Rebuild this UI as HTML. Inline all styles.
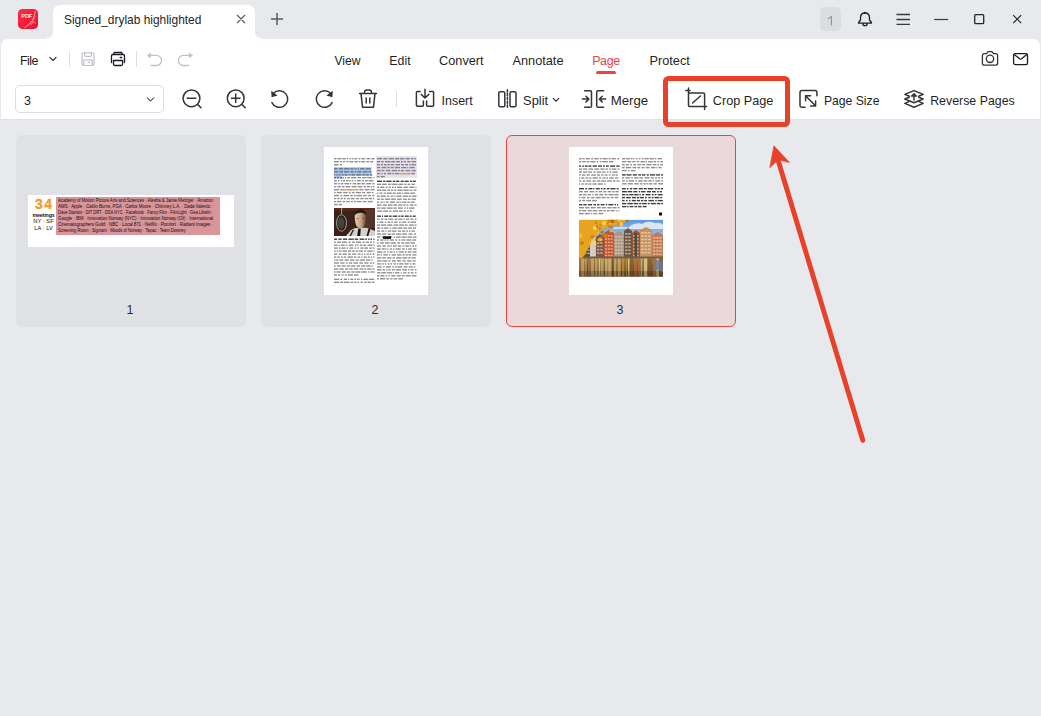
<!DOCTYPE html>
<html><head><meta charset="utf-8">
<style>
*{margin:0;padding:0;box-sizing:border-box}
html,body{width:1041px;height:716px;overflow:hidden}
body{background:#e8e9ec;font-family:"Liberation Sans",sans-serif;color:#1f1f24;position:relative}
.a{position:absolute}
.t{position:absolute;white-space:nowrap;line-height:1;font-size:12.5px}
svg{position:absolute;overflow:visible}
.ic{fill:none;stroke:#34353b;stroke-width:1.5;stroke-linecap:round;stroke-linejoin:round}
</style></head><body>

<!-- title bar -->
<svg style="left:18px;top:9px" width="20" height="20" viewBox="0 0 20 20"><defs><linearGradient id="lg" x1="0" y1="0" x2="1" y2="1"><stop offset="0" stop-color="#ff2a48"/><stop offset="1" stop-color="#f0102e"/></linearGradient></defs><rect x="0" y="0" width="20" height="20" rx="4.5" fill="url(#lg)"/><path d="M17 1.5Q17.5 12 8 18.5Q15 16 17.5 9" fill="#ff6a7c" opacity="0.55"/><path d="M17.2 2Q16.5 13 6.5 18.5" stroke="#ffd0d6" stroke-width="0.8" fill="none" opacity="0.9"/><path d="M13.5 15.5L15.5 12.5L17.5 14.5" stroke="#ffd0d6" stroke-width="0.7" fill="none" opacity="0.8"/><text x="3.3" y="8.9" font-family="Liberation Sans" font-weight="bold" font-size="5.6" fill="#ffe8ea" letter-spacing="-0.1">PDF</text></svg>
<div class="a" style="left:53px;top:5px;width:202px;height:40px;background:#fff;border-radius:7px 7px 0 0"></div>
<div class="a" style="left:46px;top:31px;width:7px;height:8px;background:radial-gradient(circle at 0 0,#e8e9ec 7px,#fff 7.6px)"></div>
<div class="a" style="left:255px;top:31px;width:7px;height:8px;background:radial-gradient(circle at 100% 0,#e8e9ec 7px,#fff 7.6px)"></div>
<div class="t" id="tabtitle" style="left:64px;top:15px;font-size:11.95px">Signed_drylab highlighted</div>


<svg style="left:236px;top:13.5px" width="10" height="10" viewBox="0 0 10 10"><path d="M1.3 1.3L8.7 8.7M8.7 1.3L1.3 8.7" stroke="#5e6068" stroke-width="1.25" stroke-linecap="round" fill="none"/></svg>
<svg style="left:271px;top:13px" width="12" height="12" viewBox="0 0 12 12"><path d="M6 0.5V11.5M0.5 6H11.5" stroke="#585a62" stroke-width="1.5" stroke-linecap="round" fill="none"/></svg>
<div class="a" style="left:820px;top:7px;width:21px;height:24px;border-radius:5px;background:#dcdde1"></div>
<svg style="left:826px;top:14px" width="8" height="12" viewBox="0 0 8 12"><path d="M5.4 2.4V11M2.3 4.6L5.4 2.4" stroke="#8d919a" stroke-width="1.1" fill="none" stroke-linecap="round" stroke-linejoin="round"/></svg>
<svg style="left:857px;top:11px" width="16" height="16" viewBox="0 0 16 16"><path d="M8 2C5.1 2 3.5 4.1 3.5 6.9V9L1.6 11.5Q1.2 12.2 1.9 12.2H14.1Q14.8 12.2 14.4 11.5L12.5 9V6.9C12.5 4.1 10.9 2 8 2ZM5.8 12.4A2.2 2.2 0 0 0 10.2 12.4" fill="none" stroke="#1f2025" stroke-width="1.3" stroke-linejoin="round"/><circle cx="8" cy="1.8" r="1" fill="#1f2025"/></svg>
<svg style="left:896px;top:13px" width="15" height="13" viewBox="0 0 15 13"><path d="M0.5 1.5H14M0.5 6.5H14M0.5 11.3H14" stroke="#383a42" stroke-width="1.3" fill="none"/></svg>
<svg style="left:934px;top:19px" width="15" height="2" viewBox="0 0 15 2"><path d="M0.2 0.5H14.2" stroke="#383a42" stroke-width="1.2" fill="none"/></svg>
<svg style="left:973px;top:13px" width="13" height="13" viewBox="0 0 13 13"><rect x="1.7" y="1.7" width="9" height="9" rx="1" stroke="#25262b" stroke-width="1.3" fill="none"/></svg>
<svg style="left:1012px;top:14px" width="11" height="11" viewBox="0 0 11 11"><path d="M1.2 1.2L9.2 9.2M9.2 1.2L1.2 9.2" stroke="#25262b" stroke-width="1.2" fill="none"/></svg>

<!-- toolbar -->
<div class="a" style="left:1px;top:39px;width:1039px;height:81px;background:#fff;border-radius:7px 7px 0 0;border-bottom:1px solid #e0e1e4"></div>


<!-- menu row -->
<div class="t" style="left:20px;top:55.4px;font-size:12.5px;letter-spacing:-0.55px">File</div>
<svg style="left:49px;top:56px" width="8" height="6" viewBox="0 0 8 6"><path d="M1 1.5L4 4.5L7 1.5" stroke="#34353b" stroke-width="1.2" fill="none" stroke-linecap="round"/></svg>
<div class="a" style="left:69px;top:51px;width:1px;height:16px;background:#dcdde0"></div>
<svg style="left:80px;top:51px" width="16" height="16" viewBox="0 0 16 16"><g fill="none" stroke="#c0c2c7" stroke-width="1.2" stroke-linejoin="round" stroke-linecap="round"><rect x="2" y="1.9" width="12" height="12.6" rx="1.3"/><path d="M4.6 1.9V4.2Q4.6 5.3 5.7 5.3H10.3Q11.4 5.3 11.4 4.2V1.9"/><path d="M3.7 14.5V9.9Q3.7 8.8 4.8 8.8H11.2Q12.3 8.8 12.3 9.9V14.5"/><path d="M8.3 11.4H9.6" stroke-width="1.3"/></g></svg>
<svg style="left:110px;top:51px" width="17" height="16" viewBox="0 0 17 16"><g fill="none" stroke="#1c1d22" stroke-width="1.3" stroke-linejoin="round" stroke-linecap="round"><path d="M3.3 3.4L4.3 1.5H11.7L12.7 3.4"/><path d="M1.5 11.6V4.9Q1.5 3.5 2.9 3.5H13.1Q14.5 3.5 14.5 4.9V11.6"/><path d="M3.5 9.5H12.6V13Q12.6 14.5 11.1 14.5H5Q3.5 14.5 3.5 13Z"/><path d="M10.3 6.6H11.6" stroke-width="1.5"/></g></svg>
<div class="a" style="left:136px;top:51px;width:1px;height:16px;background:#dcdde0"></div>
<svg style="left:146px;top:52px" width="17" height="15" viewBox="0 0 17 15"><g fill="none" stroke="#c0c2c7" stroke-width="1.3" stroke-linecap="round" stroke-linejoin="round"><path d="M3.8 3.4H10.5A5.05 5.05 0 0 1 10.5 13.5H5.3"/></g><path d="M1.2 3.4L4.6 0.9V5.9Z" fill="#c0c2c7" stroke="#c0c2c7" stroke-width="0.5" stroke-linejoin="round"/></svg>
<svg style="left:177px;top:52px" width="17" height="15" viewBox="0 0 17 15"><g transform="translate(16.9,0) scale(-1,1)"><g fill="none" stroke="#c0c2c7" stroke-width="1.3" stroke-linecap="round" stroke-linejoin="round"><path d="M3.8 3.4H10.5A5.05 5.05 0 0 1 10.5 13.5H5.3"/></g><path d="M1.2 3.4L4.6 0.9V5.9Z" fill="#c0c2c7" stroke="#c0c2c7" stroke-width="0.5" stroke-linejoin="round"/></g></svg>

<div class="t" style="left:334.5px;top:55.4px;font-size:12.1px">View</div>
<div class="t" style="left:389.3px;top:55.4px;font-size:12.36px">Edit</div>
<div class="t" style="left:439.1px;top:55.4px;font-size:12.73px">Convert</div>
<div class="t" style="left:512.5px;top:55.4px;font-size:12.74px">Annotate</div>
<div class="t" style="left:592.2px;top:55.4px;font-size:12.5px;letter-spacing:-0.4px;color:#e5473d">Page</div>
<div class="a" style="left:596px;top:71px;width:20px;height:2.5px;border-radius:2px;background:#e5473d"></div>
<div class="t" style="left:649.5px;top:55.4px;font-size:12.72px">Protect</div>

<svg style="left:981px;top:50px" width="18" height="17" viewBox="0 0 18 17"><g fill="none" stroke="#34353b" stroke-width="1.3" stroke-linejoin="round"><path d="M3.4 3.7H5.6L6.7 2Q7 1.6 7.5 1.6H10.5Q11 1.6 11.3 2L12.4 3.7H14.6Q16.6 3.7 16.6 5.7V13.2Q16.6 15.2 14.6 15.2H3.4Q1.4 15.2 1.4 13.2V5.7Q1.4 3.7 3.4 3.7Z"/><circle cx="9" cy="8.8" r="3.7"/></g></svg>
<svg style="left:1012px;top:52px" width="17" height="14" viewBox="0 0 17 14"><g fill="none" stroke="#1c1d22" stroke-width="1.3" stroke-linejoin="round" stroke-linecap="round"><rect x="1.6" y="1.7" width="13.9" height="10.9" rx="1.6"/><path d="M2.3 2.5L7.6 6.8Q8.55 7.5 9.5 6.8L14.8 2.5"/></g></svg>

<!-- tool row -->
<div class="a" style="left:15px;top:85px;width:149px;height:28px;border:1px solid #dcdde0;border-radius:5px;background:#fff"></div>
<div class="t" style="left:24px;top:95px;font-size:12.5px">3</div>
<svg style="left:146px;top:96px" width="9" height="7" viewBox="0 0 9 7"><path d="M1.2 1.8L4.5 5L7.8 1.8" stroke="#55575e" stroke-width="1.1" fill="none" stroke-linecap="round"/></svg>

<svg style="left:180px;top:87px" width="24" height="24" viewBox="0 0 24 24"><g class="ic"><circle cx="11.5" cy="11.3" r="8.4"/><path d="M17.6 17.4L21 20.8"/><path d="M7.2 11.3H15.8"/></g></svg>
<svg style="left:224px;top:87px" width="24" height="24" viewBox="0 0 24 24"><g class="ic"><circle cx="11.7" cy="11.3" r="8.4"/><path d="M17.8 17.4L21.2 20.8"/><path d="M7.4 11.3H16M11.7 7V15.6"/></g></svg>
<svg style="left:268px;top:87px" width="24" height="24" viewBox="0 0 24 24"><g class="ic"><path d="M5.5 6.2A8.3 8.3 0 1 1 3.9 15.6"/></g><path d="M3.2 3.8L3.6 10.2L9.6 8.6Z" fill="#34353b"/></svg>
<svg style="left:312px;top:87px" width="24" height="24" viewBox="0 0 24 24"><g class="ic"><path d="M18.5 6.2A8.3 8.3 0 1 0 20.1 15.6"/></g><path d="M20.8 3.8L20.4 10.2L14.4 8.6Z" fill="#34353b"/></svg>
<svg style="left:356px;top:87px" width="24" height="24" viewBox="0 0 24 24"><g class="ic"><path d="M3.5 6.5H20.5"/><path d="M8.5 6.2V5A2.2 2.2 0 0 1 10.7 3H13.3A2.2 2.2 0 0 1 15.5 5V6.2"/><path d="M5 6.5L6.5 20.2H17.5L19 6.5"/><path d="M10.2 11V16M13.8 11V16"/></g></svg>
<div class="a" style="left:396px;top:91px;width:1px;height:16px;background:#dcdde0"></div>

<svg style="left:412px;top:87px" width="26" height="24" viewBox="0 0 26 24"><g class="ic"><path d="M8.2 4.4H5.4Q4.4 4.4 4.4 5.4V18.3Q4.4 19.3 5.4 19.3H10.4Q11.4 19.3 11.4 18.3V14"/><path d="M17.6 4.4H20.6Q21.6 4.4 21.6 5.4V18.3Q21.6 19.3 20.6 19.3H15.6Q14.6 19.3 14.6 18.3V14"/><path d="M13 2.2V10.8M9.2 7.4L13 11L16.8 7.4"/></g></svg>
<div class="t" style="left:441.5px;top:95px;font-size:12.47px">Insert</div>

<svg style="left:495px;top:87px" width="24" height="24" viewBox="0 0 24 24"><g class="ic"><rect x="3.8" y="4.8" width="6" height="15" rx="1.3"/><rect x="15" y="4.8" width="6" height="15" rx="1.3"/><path d="M12.4 2.8V21.8" stroke-dasharray="2.2 1.6"/></g></svg>
<div class="t" style="left:523.1px;top:95px;font-size:12.85px">Split</div>
<svg style="left:551px;top:96px" width="9" height="7" viewBox="0 0 9 7"><path d="M2.2 2.4L5 5.1L7.8 2.4" stroke="#34353b" stroke-width="1.2" fill="none" stroke-linecap="round"/></svg>

<svg style="left:580px;top:87px" width="28" height="24" viewBox="0 0 28 24"><g class="ic"><path d="M4.6 3.8H10.2Q11.5 3.8 11.5 5.1V19Q11.5 20.3 10.2 20.3H4.6"/><path d="M23.6 3.8H18Q16.7 3.8 16.7 5.1V19Q16.7 20.3 18 20.3H23.6"/><path d="M2.5 12.1H8.6M6 9.3L8.8 12.1L6 14.9"/><path d="M25.6 12.1H19.6M22.2 9.3L19.4 12.1L22.2 14.9"/></g></svg>
<div class="t" style="left:610.7px;top:94px;font-size:13.23px">Merge</div>

<svg style="left:683px;top:86px" width="26" height="26" viewBox="0 0 26 26"><g class="ic"><path d="M2.8 4.4H7M5.5 2V19.3Q5.5 20.4 6.6 20.4H23.5M21.6 23.5V8Q21.6 6.9 20.5 6.9H5.5"/><path d="M9.5 17L17.5 10"/></g></svg>
<div class="t" style="left:712.8px;top:95px;font-size:12.67px">Crop Page</div>

<svg style="left:797px;top:87px" width="24" height="24" viewBox="0 0 24 24"><g class="ic"><path d="M8 20.3H4.7Q3 20.3 3 18.6V5.4Q3 3.6 4.7 3.6H18.2Q19.9 3.6 19.9 5.4V8.8"/><path d="M9 9.2L18.5 18.8M8.6 13.8V8.8H13.6M18.6 14V19H13.6"/></g></svg>
<div class="t" style="left:823.9px;top:95px;font-size:12.2px">Page Size</div>

<svg style="left:902px;top:87px" width="24" height="24" viewBox="0 0 24 24"><g class="ic"><path d="M12 3.6L21.2 7.4L16.6 9.3M7.4 9.3L2.8 7.4L12 3.6"/><path d="M7.2 10.2L2.8 12L12 15.8L21.2 12L16.8 10.2"/><path d="M7 14.6L2.8 16.4L12 20.3L21.2 16.4L17 14.6"/><path d="M12 13V7.5"/></g><path d="M9.2 9.2L12 6.3L14.8 9.2Z" fill="#34353b" stroke="#34353b" stroke-width="1" stroke-linejoin="round"/></svg>
<div class="t" style="left:930.2px;top:95px;font-size:12.36px">Reverse Pages</div>

<!-- cards -->
<div class="a" style="left:16px;top:135px;width:230px;height:192px;background:#e0e1e4;border-radius:6px"></div>
<div class="a" style="left:261px;top:135px;width:230px;height:192px;background:#e0e1e4;border-radius:6px"></div>
<div class="a" style="left:506px;top:135px;width:230px;height:192px;background:#e9d9db;border:1px solid #e5473d;border-radius:6px"></div>

<div class="a" style="left:28px;top:195px;width:206px;height:52px;background:#fff"></div>
<div class="a" style="left:324px;top:147px;width:104px;height:148px;background:#fff"></div>
<div class="a" style="left:569px;top:147px;width:104px;height:148px;background:#fff"></div>



<div class="t" style="left:126.5px;top:304px;font-size:12.5px;color:#2b2c31">1</div>
<div class="t" style="left:371.5px;top:304px;font-size:12.5px;color:#2b2c31">2</div>
<div class="t" style="left:616.5px;top:304px;font-size:12.5px;color:#2b2c31">3</div>

<!-- thumbs -->
<div class="a" style="left:56px;top:197px;width:164px;height:37.5px;background:#d9959a"></div>
<div class="t" style="left:28px;width:31px;text-align:center;top:196.6px;font-size:14px;font-weight:bold;color:#f29b2c;letter-spacing:1.5px;text-indent:1.5px;-webkit-text-stroke:0.35px #f29b2c">34</div>
<div class="t" style="left:28px;width:31px;text-align:center;top:213px;font-size:5.3px;font-weight:bold;color:#111;letter-spacing:-0.15px">meetings</div>
<div class="t" style="left:28px;width:31px;text-align:center;top:219.2px;font-size:5.8px;color:#111">NY · SF</div>
<div class="t" style="left:28px;width:31px;text-align:center;top:225.8px;font-size:5.8px;color:#111">LA · LV</div>
<div class="a" style="left:58px;top:197.6px;font-size:4.75px;line-height:5.98px;color:#150a0a;letter-spacing:-0.04px;white-space:nowrap">
<div style="transform:scaleX(0.912);transform-origin:0 0">Academy of Motion Picture Arts and Sciences · Alesha &amp; Jamie Metzger · Amazon</div>
<div style="transform:scaleX(0.918);transform-origin:0 0">AWS · Apple · Caitlin Burns, PGA · Carlos Moore · Chimney L.A. · Dada Valentic ·</div>
<div style="transform:scaleX(0.858);transform-origin:0 0">Dave Stanton · DIT DRT · DSA NYC · Facebook · Fancy Film · FilmLight · Gea Libeltri ·</div>
<div style="transform:scaleX(0.928);transform-origin:0 0">Google · IBM · Innovation Norway (NYC) · Innovation Norway (Oil) · International</div>
<div style="transform:scaleX(0.933);transform-origin:0 0">Cinematographers Guild · NBC · Local 871 · Netflix · Pomfort · Radiant Images ·</div>
<div style="transform:scaleX(0.871);transform-origin:0 0">Screening Room · Signiant · Moods of Norway · Tapac · Team Downey</div>
</div>
<svg style="left:0;top:0" width="1041" height="716" viewBox="0 0 1041 716"><rect x="334.0" y="158.0" width="2.6" height="1.4" fill="#333" opacity="0.55"/><rect x="337.5" y="158.0" width="4.0" height="1.4" fill="#333" opacity="0.55"/><rect x="342.3" y="158.0" width="3.5" height="1.4" fill="#333" opacity="0.55"/><rect x="346.8" y="158.0" width="1.4" height="1.4" fill="#333" opacity="0.55"/><rect x="349.4" y="158.0" width="1.4" height="1.4" fill="#333" opacity="0.55"/><rect x="351.8" y="158.0" width="1.5" height="1.4" fill="#333" opacity="0.55"/><rect x="354.2" y="158.0" width="3.0" height="1.4" fill="#333" opacity="0.55"/><rect x="358.5" y="158.0" width="1.7" height="1.4" fill="#333" opacity="0.55"/><rect x="361.2" y="158.0" width="3.9" height="1.4" fill="#333" opacity="0.55"/><rect x="366.4" y="158.0" width="3.7" height="1.4" fill="#333" opacity="0.55"/><rect x="371.2" y="158.0" width="3.3" height="1.4" fill="#333" opacity="0.55"/><rect x="334.0" y="161.0" width="4.9" height="1.4" fill="#333" opacity="0.55"/><rect x="339.9" y="161.0" width="1.8" height="1.4" fill="#333" opacity="0.55"/><rect x="342.6" y="161.0" width="2.5" height="1.4" fill="#333" opacity="0.55"/><rect x="346.4" y="161.0" width="2.0" height="1.4" fill="#333" opacity="0.55"/><rect x="349.5" y="161.0" width="3.9" height="1.4" fill="#333" opacity="0.55"/><rect x="354.5" y="161.0" width="3.6" height="1.4" fill="#333" opacity="0.55"/><rect x="358.9" y="161.0" width="1.5" height="1.4" fill="#333" opacity="0.55"/><rect x="361.2" y="161.0" width="4.1" height="1.4" fill="#333" opacity="0.55"/><rect x="366.4" y="161.0" width="2.6" height="1.4" fill="#333" opacity="0.55"/><rect x="370.1" y="161.0" width="3.1" height="1.4" fill="#333" opacity="0.55"/><rect x="334.0" y="164.0" width="4.6" height="1.4" fill="#333" opacity="0.55"/><rect x="339.8" y="164.0" width="2.2" height="1.4" fill="#333" opacity="0.55"/><rect x="334" y="167.2" width="37.5" height="8.9" fill="#a9c6ec"/><rect x="334" y="176" width="8" height="2.8" fill="#a9c6ec"/><rect x="334.0" y="168.1" width="3.5" height="1.4" fill="#333" opacity="0.55"/><rect x="338.8" y="168.1" width="4.3" height="1.4" fill="#333" opacity="0.55"/><rect x="344.1" y="168.1" width="5.4" height="1.4" fill="#333" opacity="0.55"/><rect x="350.4" y="168.1" width="3.0" height="1.4" fill="#333" opacity="0.55"/><rect x="354.6" y="168.1" width="1.9" height="1.4" fill="#333" opacity="0.55"/><rect x="357.6" y="168.1" width="1.4" height="1.4" fill="#333" opacity="0.55"/><rect x="360.1" y="168.1" width="4.5" height="1.4" fill="#333" opacity="0.55"/><rect x="365.8" y="168.1" width="5.0" height="1.4" fill="#333" opacity="0.55"/><rect x="334.0" y="171.1" width="4.2" height="1.4" fill="#333" opacity="0.55"/><rect x="339.3" y="171.1" width="3.7" height="1.4" fill="#333" opacity="0.55"/><rect x="344.1" y="171.1" width="4.8" height="1.4" fill="#333" opacity="0.55"/><rect x="350.3" y="171.1" width="3.2" height="1.4" fill="#333" opacity="0.55"/><rect x="354.7" y="171.1" width="1.5" height="1.4" fill="#333" opacity="0.55"/><rect x="357.4" y="171.1" width="4.0" height="1.4" fill="#333" opacity="0.55"/><rect x="362.8" y="171.1" width="4.7" height="1.4" fill="#333" opacity="0.55"/><rect x="368.5" y="171.1" width="2.9" height="1.4" fill="#333" opacity="0.55"/><rect x="334.0" y="174.1" width="1.3" height="1.4" fill="#333" opacity="0.55"/><rect x="336.4" y="174.1" width="1.9" height="1.4" fill="#333" opacity="0.55"/><rect x="339.2" y="174.1" width="1.5" height="1.4" fill="#333" opacity="0.55"/><rect x="341.9" y="174.1" width="1.8" height="1.4" fill="#333" opacity="0.55"/><rect x="344.6" y="174.1" width="2.9" height="1.4" fill="#333" opacity="0.55"/><rect x="348.8" y="174.1" width="1.5" height="1.4" fill="#333" opacity="0.55"/><rect x="351.4" y="174.1" width="3.6" height="1.4" fill="#333" opacity="0.55"/><rect x="356.3" y="174.1" width="4.7" height="1.4" fill="#333" opacity="0.55"/><rect x="362.3" y="174.1" width="2.4" height="1.4" fill="#333" opacity="0.55"/><rect x="365.8" y="174.1" width="2.7" height="1.4" fill="#333" opacity="0.55"/><rect x="369.9" y="174.1" width="2.6" height="1.4" fill="#333" opacity="0.55"/><rect x="334.0" y="177.0" width="2.0" height="1.4" fill="#333" opacity="0.55"/><rect x="336.9" y="177.0" width="2.2" height="1.4" fill="#333" opacity="0.55"/><rect x="340.2" y="177.0" width="3.7" height="1.4" fill="#333" opacity="0.55"/><rect x="344.9" y="177.0" width="1.2" height="1.4" fill="#333" opacity="0.55"/><rect x="347.2" y="177.0" width="2.8" height="1.4" fill="#333" opacity="0.55"/><rect x="351.1" y="177.0" width="5.3" height="1.4" fill="#333" opacity="0.55"/><rect x="357.6" y="177.0" width="3.4" height="1.4" fill="#333" opacity="0.55"/><rect x="362.2" y="177.0" width="4.1" height="1.4" fill="#333" opacity="0.55"/><rect x="367.1" y="177.0" width="5.1" height="1.4" fill="#333" opacity="0.55"/><rect x="373.5" y="177.0" width="1.0" height="1.4" fill="#333" opacity="0.55"/><rect x="334.0" y="180.0" width="2.9" height="1.4" fill="#333" opacity="0.55"/><rect x="337.9" y="180.0" width="1.6" height="1.4" fill="#333" opacity="0.55"/><rect x="340.8" y="180.0" width="1.5" height="1.4" fill="#333" opacity="0.55"/><rect x="343.1" y="180.0" width="2.1" height="1.4" fill="#333" opacity="0.55"/><rect x="346.1" y="180.0" width="2.7" height="1.4" fill="#333" opacity="0.55"/><rect x="349.5" y="180.0" width="1.2" height="1.4" fill="#333" opacity="0.55"/><rect x="351.6" y="180.0" width="1.6" height="1.4" fill="#333" opacity="0.55"/><rect x="354.3" y="180.0" width="1.3" height="1.4" fill="#333" opacity="0.55"/><rect x="356.9" y="180.0" width="3.8" height="1.4" fill="#333" opacity="0.55"/><rect x="361.7" y="180.0" width="2.3" height="1.4" fill="#333" opacity="0.55"/><rect x="365.0" y="180.0" width="2.8" height="1.4" fill="#333" opacity="0.55"/><rect x="368.6" y="180.0" width="4.9" height="1.4" fill="#333" opacity="0.55"/><rect x="334.0" y="183.0" width="3.2" height="1.4" fill="#333" opacity="0.55"/><rect x="338.3" y="183.0" width="1.6" height="1.4" fill="#333" opacity="0.55"/><rect x="340.7" y="183.0" width="2.7" height="1.4" fill="#333" opacity="0.55"/><rect x="344.4" y="183.0" width="4.8" height="1.4" fill="#333" opacity="0.55"/><rect x="350.0" y="183.0" width="1.3" height="1.4" fill="#333" opacity="0.55"/><rect x="352.7" y="183.0" width="3.5" height="1.4" fill="#333" opacity="0.55"/><rect x="357.0" y="183.0" width="3.5" height="1.4" fill="#333" opacity="0.55"/><rect x="361.4" y="183.0" width="3.5" height="1.4" fill="#333" opacity="0.55"/><rect x="366.3" y="183.0" width="4.9" height="1.4" fill="#333" opacity="0.55"/><rect x="372.4" y="183.0" width="2.1" height="1.4" fill="#333" opacity="0.55"/><rect x="334.0" y="186.0" width="1.9" height="1.4" fill="#333" opacity="0.55"/><rect x="337.2" y="186.0" width="3.5" height="1.4" fill="#333" opacity="0.55"/><rect x="341.9" y="186.0" width="2.6" height="1.4" fill="#333" opacity="0.55"/><rect x="345.5" y="186.0" width="4.7" height="1.4" fill="#333" opacity="0.55"/><rect x="351.6" y="186.0" width="4.9" height="1.4" fill="#333" opacity="0.55"/><rect x="357.7" y="186.0" width="4.7" height="1.4" fill="#333" opacity="0.55"/><rect x="363.7" y="186.0" width="2.2" height="1.4" fill="#333" opacity="0.55"/><rect x="367.0" y="186.0" width="2.7" height="1.4" fill="#333" opacity="0.55"/><rect x="370.5" y="186.0" width="1.3" height="1.4" fill="#333" opacity="0.55"/><rect x="372.8" y="186.0" width="1.7" height="1.4" fill="#333" opacity="0.55"/><rect x="334.0" y="189.0" width="5.3" height="1.4" fill="#333" opacity="0.55"/><rect x="340.4" y="189.0" width="5.2" height="1.4" fill="#333" opacity="0.55"/><rect x="347.0" y="189.0" width="5.3" height="1.4" fill="#333" opacity="0.55"/><rect x="353.3" y="189.0" width="2.1" height="1.4" fill="#333" opacity="0.55"/><rect x="356.4" y="189.0" width="2.0" height="1.4" fill="#333" opacity="0.55"/><rect x="359.4" y="189.0" width="3.9" height="1.4" fill="#333" opacity="0.55"/><rect x="364.6" y="189.0" width="4.8" height="1.4" fill="#333" opacity="0.55"/><rect x="370.5" y="189.0" width="4.0" height="1.4" fill="#333" opacity="0.55"/><rect x="334.0" y="191.9" width="1.6" height="1.4" fill="#333" opacity="0.55"/><rect x="336.8" y="191.9" width="5.1" height="1.4" fill="#333" opacity="0.55"/><rect x="343.1" y="191.9" width="4.4" height="1.4" fill="#333" opacity="0.55"/><rect x="348.7" y="191.9" width="2.0" height="1.4" fill="#333" opacity="0.55"/><rect x="351.9" y="191.9" width="2.6" height="1.4" fill="#333" opacity="0.55"/><rect x="355.8" y="191.9" width="5.4" height="1.4" fill="#333" opacity="0.55"/><rect x="362.2" y="191.9" width="2.9" height="1.4" fill="#333" opacity="0.55"/><rect x="366.5" y="191.9" width="4.3" height="1.4" fill="#333" opacity="0.55"/><rect x="371.7" y="191.9" width="1.7" height="1.4" fill="#333" opacity="0.55"/><rect x="334.0" y="194.9" width="5.1" height="1.4" fill="#333" opacity="0.55"/><rect x="340.4" y="194.9" width="1.8" height="1.4" fill="#333" opacity="0.55"/><rect x="343.5" y="194.9" width="5.4" height="1.4" fill="#333" opacity="0.55"/><rect x="350.1" y="194.9" width="2.7" height="1.4" fill="#333" opacity="0.55"/><rect x="353.9" y="194.9" width="1.8" height="1.4" fill="#333" opacity="0.55"/><rect x="356.5" y="194.9" width="5.4" height="1.4" fill="#333" opacity="0.55"/><rect x="363.1" y="194.9" width="3.5" height="1.4" fill="#333" opacity="0.55"/><rect x="367.9" y="194.9" width="3.1" height="1.4" fill="#333" opacity="0.55"/><rect x="372.3" y="194.9" width="2.2" height="1.4" fill="#333" opacity="0.55"/><rect x="334.0" y="197.9" width="2.3" height="1.4" fill="#333" opacity="0.55"/><rect x="337.3" y="197.9" width="2.2" height="1.4" fill="#333" opacity="0.55"/><rect x="340.6" y="197.9" width="2.3" height="1.4" fill="#333" opacity="0.55"/><rect x="344.0" y="197.9" width="1.8" height="1.4" fill="#333" opacity="0.55"/><rect x="347.1" y="197.9" width="2.7" height="1.4" fill="#333" opacity="0.55"/><rect x="350.9" y="197.9" width="3.7" height="1.4" fill="#333" opacity="0.55"/><rect x="356.0" y="197.9" width="3.0" height="1.4" fill="#333" opacity="0.55"/><rect x="360.3" y="197.9" width="3.4" height="1.4" fill="#333" opacity="0.55"/><rect x="364.8" y="197.9" width="3.5" height="1.4" fill="#333" opacity="0.55"/><rect x="369.1" y="197.9" width="3.1" height="1.4" fill="#333" opacity="0.55"/><rect x="373.1" y="197.9" width="1.2" height="1.4" fill="#333" opacity="0.55"/><rect x="334.0" y="200.9" width="1.9" height="1.4" fill="#333" opacity="0.55"/><rect x="337.0" y="200.9" width="4.3" height="1.4" fill="#333" opacity="0.55"/><rect x="342.5" y="200.9" width="2.6" height="1.4" fill="#333" opacity="0.55"/><rect x="346.2" y="200.9" width="3.6" height="1.4" fill="#333" opacity="0.55"/><rect x="351.0" y="200.9" width="1.7" height="1.4" fill="#333" opacity="0.55"/><rect x="353.8" y="200.9" width="2.3" height="1.4" fill="#333" opacity="0.55"/><rect x="357.1" y="200.9" width="4.5" height="1.4" fill="#333" opacity="0.55"/><rect x="362.7" y="200.9" width="3.6" height="1.4" fill="#333" opacity="0.55"/><rect x="367.6" y="200.9" width="5.1" height="1.4" fill="#333" opacity="0.55"/><rect x="334.0" y="203.9" width="3.8" height="1.4" fill="#333" opacity="0.55"/><rect x="338.9" y="203.9" width="3.2" height="1.4" fill="#333" opacity="0.55"/><rect x="342.7" y="189" width="14.8" height="1.3" fill="#f0a347"/><defs><linearGradient id="face" x1="0" y1="0" x2="1" y2="0"><stop offset="0" stop-color="#e8cbb0"/><stop offset="0.55" stop-color="#c9a184"/><stop offset="1" stop-color="#6e4a36"/></linearGradient></defs>
<rect x="334" y="208" width="41" height="28" fill="#3a2219"/>
<rect x="334" y="208" width="41" height="2.5" fill="#6a2e1e" opacity="0.7"/>
<rect x="362" y="210" width="13" height="18" fill="#6a4434" opacity="0.55"/>
<ellipse cx="341.5" cy="223" rx="5" ry="8.3" fill="none" stroke="#a8a098" stroke-width="0.9"/>
<ellipse cx="341" cy="223" rx="3.2" ry="5.5" fill="#3e4644"/>
<rect x="341.2" y="208" width="0.9" height="6" fill="#b8b2aa"/>
<path d="M354.6 215.5Q354.8 210.5 360.2 210Q365.5 210.5 366 215.5L365.6 221.5Q364.5 227.5 360.5 228.5Q356.2 227.8 355.2 222Z" fill="url(#face)"/><path d="M354.3 216.5Q354 210 360.3 209.5Q366.5 210 366.3 216Q365 212.5 360.5 212.8Q356 212.5 354.3 216.5Z" fill="#22150e"/><rect x="357" y="218" width="2" height="0.8" fill="#5a3a2a" opacity="0.7"/><rect x="362" y="218" width="2" height="0.8" fill="#5a3a2a" opacity="0.7"/><path d="M346 236L351 230Q356 227 360 228Q366 227 370 229L375 231V236Z" fill="#d6d0ca"/>
<path d="M358.3 228.5L357.2 236H360.2L360.8 228.5Z" fill="#141414"/>
<path d="M352.5 230L349.5 236H351L354 230Z" fill="#1e1e1e"/>
<path d="M368.5 228.5L366.5 236H368.3L370.3 229Z" fill="#141414"/><rect x="334.0" y="238.5" width="3.1" height="1.4" fill="#111" opacity="0.8"/><rect x="338.3" y="238.5" width="3.3" height="1.4" fill="#111" opacity="0.8"/><rect x="342.9" y="238.5" width="4.2" height="1.4" fill="#111" opacity="0.8"/><rect x="348.4" y="238.5" width="5.3" height="1.4" fill="#111" opacity="0.8"/><rect x="354.6" y="238.5" width="3.6" height="1.4" fill="#111" opacity="0.8"/><rect x="359.6" y="238.5" width="4.8" height="1.4" fill="#111" opacity="0.8"/><rect x="365.3" y="238.5" width="1.7" height="1.4" fill="#111" opacity="0.8"/><rect x="368.1" y="238.5" width="1.5" height="1.4" fill="#111" opacity="0.8"/><rect x="370.5" y="238.5" width="1.5" height="1.4" fill="#111" opacity="0.8"/><rect x="373.3" y="238.5" width="1.2" height="1.4" fill="#111" opacity="0.8"/><rect x="334.0" y="241.5" width="1.9" height="1.4" fill="#333" opacity="0.55"/><rect x="337.1" y="241.5" width="4.0" height="1.4" fill="#333" opacity="0.55"/><rect x="342.0" y="241.5" width="5.0" height="1.4" fill="#333" opacity="0.55"/><rect x="348.4" y="241.5" width="2.1" height="1.4" fill="#333" opacity="0.55"/><rect x="351.9" y="241.5" width="2.9" height="1.4" fill="#333" opacity="0.55"/><rect x="355.9" y="241.5" width="5.5" height="1.4" fill="#333" opacity="0.55"/><rect x="362.7" y="241.5" width="1.9" height="1.4" fill="#333" opacity="0.55"/><rect x="365.6" y="241.5" width="3.4" height="1.4" fill="#333" opacity="0.55"/><rect x="370.0" y="241.5" width="2.0" height="1.4" fill="#333" opacity="0.55"/><rect x="373.1" y="241.5" width="1.4" height="1.4" fill="#333" opacity="0.55"/><rect x="334.0" y="244.5" width="3.6" height="1.4" fill="#333" opacity="0.55"/><rect x="338.6" y="244.5" width="1.3" height="1.4" fill="#333" opacity="0.55"/><rect x="340.9" y="244.5" width="3.9" height="1.4" fill="#333" opacity="0.55"/><rect x="345.9" y="244.5" width="1.5" height="1.4" fill="#333" opacity="0.55"/><rect x="348.8" y="244.5" width="4.6" height="1.4" fill="#333" opacity="0.55"/><rect x="354.8" y="244.5" width="1.7" height="1.4" fill="#333" opacity="0.55"/><rect x="357.4" y="244.5" width="1.4" height="1.4" fill="#333" opacity="0.55"/><rect x="360.0" y="244.5" width="2.4" height="1.4" fill="#333" opacity="0.55"/><rect x="363.2" y="244.5" width="3.0" height="1.4" fill="#333" opacity="0.55"/><rect x="367.6" y="244.5" width="4.7" height="1.4" fill="#333" opacity="0.55"/><rect x="373.3" y="244.5" width="1.2" height="1.4" fill="#333" opacity="0.55"/><rect x="334.0" y="247.4" width="3.7" height="1.4" fill="#333" opacity="0.55"/><rect x="338.9" y="247.4" width="1.6" height="1.4" fill="#333" opacity="0.55"/><rect x="341.3" y="247.4" width="4.2" height="1.4" fill="#333" opacity="0.55"/><rect x="346.5" y="247.4" width="1.5" height="1.4" fill="#333" opacity="0.55"/><rect x="349.4" y="247.4" width="3.9" height="1.4" fill="#333" opacity="0.55"/><rect x="354.6" y="247.4" width="1.6" height="1.4" fill="#333" opacity="0.55"/><rect x="357.5" y="247.4" width="1.5" height="1.4" fill="#333" opacity="0.55"/><rect x="360.3" y="247.4" width="3.2" height="1.4" fill="#333" opacity="0.55"/><rect x="364.4" y="247.4" width="3.6" height="1.4" fill="#333" opacity="0.55"/><rect x="369.4" y="247.4" width="2.4" height="1.4" fill="#333" opacity="0.55"/><rect x="372.6" y="247.4" width="1.9" height="1.4" fill="#333" opacity="0.55"/><rect x="334.0" y="250.4" width="1.7" height="1.4" fill="#333" opacity="0.55"/><rect x="336.6" y="250.4" width="1.4" height="1.4" fill="#333" opacity="0.55"/><rect x="338.9" y="250.4" width="2.5" height="1.4" fill="#333" opacity="0.55"/><rect x="342.4" y="250.4" width="4.5" height="1.4" fill="#333" opacity="0.55"/><rect x="347.9" y="250.4" width="3.4" height="1.4" fill="#333" opacity="0.55"/><rect x="352.1" y="250.4" width="2.7" height="1.4" fill="#333" opacity="0.55"/><rect x="355.6" y="250.4" width="2.3" height="1.4" fill="#333" opacity="0.55"/><rect x="358.7" y="250.4" width="4.4" height="1.4" fill="#333" opacity="0.55"/><rect x="364.2" y="250.4" width="2.0" height="1.4" fill="#333" opacity="0.55"/><rect x="367.3" y="250.4" width="5.2" height="1.4" fill="#333" opacity="0.55"/><rect x="373.4" y="250.4" width="1.1" height="1.4" fill="#333" opacity="0.55"/><rect x="334.0" y="253.4" width="3.3" height="1.4" fill="#333" opacity="0.55"/><rect x="338.6" y="253.4" width="2.9" height="1.4" fill="#333" opacity="0.55"/><rect x="342.6" y="253.4" width="4.2" height="1.4" fill="#333" opacity="0.55"/><rect x="348.2" y="253.4" width="2.7" height="1.4" fill="#333" opacity="0.55"/><rect x="352.1" y="253.4" width="4.2" height="1.4" fill="#333" opacity="0.55"/><rect x="357.6" y="253.4" width="2.9" height="1.4" fill="#333" opacity="0.55"/><rect x="361.5" y="253.4" width="1.4" height="1.4" fill="#333" opacity="0.55"/><rect x="363.8" y="253.4" width="1.5" height="1.4" fill="#333" opacity="0.55"/><rect x="366.6" y="253.4" width="2.3" height="1.4" fill="#333" opacity="0.55"/><rect x="369.8" y="253.4" width="1.6" height="1.4" fill="#333" opacity="0.55"/><rect x="372.6" y="253.4" width="1.9" height="1.4" fill="#333" opacity="0.55"/><rect x="334.0" y="256.4" width="2.4" height="1.4" fill="#333" opacity="0.55"/><rect x="337.4" y="256.4" width="2.5" height="1.4" fill="#333" opacity="0.55"/><rect x="340.9" y="256.4" width="1.9" height="1.4" fill="#333" opacity="0.55"/><rect x="343.8" y="256.4" width="2.3" height="1.4" fill="#333" opacity="0.55"/><rect x="347.5" y="256.4" width="5.4" height="1.4" fill="#333" opacity="0.55"/><rect x="354.1" y="256.4" width="2.3" height="1.4" fill="#333" opacity="0.55"/><rect x="357.7" y="256.4" width="2.5" height="1.4" fill="#333" opacity="0.55"/><rect x="361.2" y="256.4" width="1.2" height="1.4" fill="#333" opacity="0.55"/><rect x="363.5" y="256.4" width="3.2" height="1.4" fill="#333" opacity="0.55"/><rect x="367.8" y="256.4" width="2.1" height="1.4" fill="#333" opacity="0.55"/><rect x="371.0" y="256.4" width="1.2" height="1.4" fill="#333" opacity="0.55"/><rect x="373.2" y="256.4" width="1.3" height="1.4" fill="#333" opacity="0.55"/><rect x="334.0" y="259.4" width="1.4" height="1.4" fill="#333" opacity="0.55"/><rect x="336.2" y="259.4" width="2.5" height="1.4" fill="#333" opacity="0.55"/><rect x="339.6" y="259.4" width="3.7" height="1.4" fill="#333" opacity="0.55"/><rect x="344.5" y="259.4" width="4.4" height="1.4" fill="#333" opacity="0.55"/><rect x="350.1" y="259.4" width="4.3" height="1.4" fill="#333" opacity="0.55"/><rect x="355.7" y="259.4" width="2.9" height="1.4" fill="#333" opacity="0.55"/><rect x="359.6" y="259.4" width="5.4" height="1.4" fill="#333" opacity="0.55"/><rect x="365.9" y="259.4" width="4.3" height="1.4" fill="#333" opacity="0.55"/><rect x="371.4" y="259.4" width="1.4" height="1.4" fill="#333" opacity="0.55"/><rect x="334.0" y="262.3" width="5.0" height="1.4" fill="#333" opacity="0.55"/><rect x="340.2" y="262.3" width="4.4" height="1.4" fill="#333" opacity="0.55"/><rect x="345.9" y="262.3" width="1.8" height="1.4" fill="#333" opacity="0.55"/><rect x="348.8" y="262.3" width="3.4" height="1.4" fill="#333" opacity="0.55"/><rect x="353.4" y="262.3" width="4.7" height="1.4" fill="#333" opacity="0.55"/><rect x="359.4" y="262.3" width="3.7" height="1.4" fill="#333" opacity="0.55"/><rect x="364.4" y="262.3" width="4.1" height="1.4" fill="#333" opacity="0.55"/><rect x="369.8" y="262.3" width="2.2" height="1.4" fill="#333" opacity="0.55"/><rect x="372.8" y="262.3" width="1.7" height="1.4" fill="#333" opacity="0.55"/><rect x="334.0" y="265.3" width="1.7" height="1.4" fill="#333" opacity="0.55"/><rect x="337.0" y="265.3" width="3.6" height="1.4" fill="#333" opacity="0.55"/><rect x="341.7" y="265.3" width="3.9" height="1.4" fill="#333" opacity="0.55"/><rect x="346.8" y="265.3" width="3.3" height="1.4" fill="#333" opacity="0.55"/><rect x="350.9" y="265.3" width="4.6" height="1.4" fill="#333" opacity="0.55"/><rect x="356.8" y="265.3" width="3.4" height="1.4" fill="#333" opacity="0.55"/><rect x="361.3" y="265.3" width="4.0" height="1.4" fill="#333" opacity="0.55"/><rect x="366.2" y="265.3" width="4.4" height="1.4" fill="#333" opacity="0.55"/><rect x="371.5" y="265.3" width="1.5" height="1.4" fill="#333" opacity="0.55"/><rect x="334.0" y="268.3" width="4.3" height="1.4" fill="#333" opacity="0.55"/><rect x="339.3" y="268.3" width="4.4" height="1.4" fill="#333" opacity="0.55"/><rect x="345.0" y="268.3" width="3.3" height="1.4" fill="#333" opacity="0.55"/><rect x="349.4" y="268.3" width="3.3" height="1.4" fill="#333" opacity="0.55"/><rect x="353.8" y="268.3" width="4.5" height="1.4" fill="#333" opacity="0.55"/><rect x="359.5" y="268.3" width="4.0" height="1.4" fill="#333" opacity="0.55"/><rect x="364.3" y="268.3" width="1.8" height="1.4" fill="#333" opacity="0.55"/><rect x="367.1" y="268.3" width="4.4" height="1.4" fill="#333" opacity="0.55"/><rect x="372.5" y="268.3" width="2.0" height="1.4" fill="#333" opacity="0.55"/><rect x="334.0" y="271.3" width="1.5" height="1.4" fill="#333" opacity="0.55"/><rect x="336.4" y="271.3" width="4.1" height="1.4" fill="#333" opacity="0.55"/><rect x="341.7" y="271.3" width="4.1" height="1.4" fill="#333" opacity="0.55"/><rect x="346.8" y="271.3" width="3.4" height="1.4" fill="#333" opacity="0.55"/><rect x="351.3" y="271.3" width="3.2" height="1.4" fill="#333" opacity="0.55"/><rect x="355.4" y="271.3" width="5.0" height="1.4" fill="#333" opacity="0.55"/><rect x="361.3" y="271.3" width="5.4" height="1.4" fill="#333" opacity="0.55"/><rect x="368.1" y="271.3" width="1.3" height="1.4" fill="#333" opacity="0.55"/><rect x="370.5" y="271.3" width="4.0" height="1.4" fill="#333" opacity="0.55"/><rect x="334.0" y="274.3" width="3.1" height="1.4" fill="#333" opacity="0.55"/><rect x="338.1" y="274.3" width="2.1" height="1.4" fill="#333" opacity="0.55"/><rect x="341.6" y="274.3" width="2.1" height="1.4" fill="#333" opacity="0.55"/><rect x="344.8" y="274.3" width="1.8" height="1.4" fill="#333" opacity="0.55"/><rect x="347.7" y="274.3" width="5.3" height="1.4" fill="#333" opacity="0.55"/><rect x="353.9" y="274.3" width="4.4" height="1.4" fill="#333" opacity="0.55"/><rect x="334.0" y="278.6" width="5.0" height="1.4" fill="#333" opacity="0.55"/><rect x="340.2" y="278.6" width="2.2" height="1.4" fill="#333" opacity="0.55"/><rect x="343.8" y="278.6" width="3.3" height="1.4" fill="#333" opacity="0.55"/><rect x="347.9" y="278.6" width="1.2" height="1.4" fill="#333" opacity="0.55"/><rect x="350.2" y="278.6" width="3.1" height="1.4" fill="#333" opacity="0.55"/><rect x="354.3" y="278.6" width="1.8" height="1.4" fill="#333" opacity="0.55"/><rect x="357.1" y="278.6" width="2.6" height="1.4" fill="#333" opacity="0.55"/><rect x="361.0" y="278.6" width="1.2" height="1.4" fill="#333" opacity="0.55"/><rect x="363.4" y="278.6" width="4.8" height="1.4" fill="#333" opacity="0.55"/><rect x="369.1" y="278.6" width="5.2" height="1.4" fill="#333" opacity="0.55"/><rect x="334.0" y="281.6" width="5.1" height="1.4" fill="#333" opacity="0.55"/><rect x="340.1" y="281.6" width="2.8" height="1.4" fill="#333" opacity="0.55"/><rect x="343.9" y="281.6" width="5.5" height="1.4" fill="#333" opacity="0.55"/><rect x="350.5" y="281.6" width="2.8" height="1.4" fill="#333" opacity="0.55"/><rect x="354.3" y="281.6" width="2.4" height="1.4" fill="#333" opacity="0.55"/><rect x="357.6" y="281.6" width="1.6" height="1.4" fill="#333" opacity="0.55"/><rect x="360.5" y="281.6" width="2.4" height="1.4" fill="#333" opacity="0.55"/><rect x="364.3" y="281.6" width="2.3" height="1.4" fill="#333" opacity="0.55"/><rect x="367.5" y="281.6" width="3.4" height="1.4" fill="#333" opacity="0.55"/><rect x="371.8" y="281.6" width="2.7" height="1.4" fill="#333" opacity="0.55"/><rect x="376" y="156" width="41" height="21.8" fill="#e7e1ee"/><rect x="377.0" y="158.0" width="5.0" height="1.4" fill="#333" opacity="0.55"/><rect x="383.3" y="158.0" width="3.9" height="1.4" fill="#333" opacity="0.55"/><rect x="388.6" y="158.0" width="5.2" height="1.4" fill="#333" opacity="0.55"/><rect x="394.9" y="158.0" width="4.3" height="1.4" fill="#333" opacity="0.55"/><rect x="400.0" y="158.0" width="4.3" height="1.4" fill="#333" opacity="0.55"/><rect x="405.5" y="158.0" width="4.4" height="1.4" fill="#333" opacity="0.55"/><rect x="411.1" y="158.0" width="2.4" height="1.4" fill="#333" opacity="0.55"/><rect x="414.4" y="158.0" width="1.6" height="1.4" fill="#333" opacity="0.55"/><rect x="377.0" y="161.0" width="3.2" height="1.4" fill="#333" opacity="0.55"/><rect x="381.2" y="161.0" width="2.5" height="1.4" fill="#333" opacity="0.55"/><rect x="385.0" y="161.0" width="5.4" height="1.4" fill="#333" opacity="0.55"/><rect x="391.3" y="161.0" width="4.0" height="1.4" fill="#333" opacity="0.55"/><rect x="396.3" y="161.0" width="3.6" height="1.4" fill="#333" opacity="0.55"/><rect x="400.9" y="161.0" width="1.9" height="1.4" fill="#333" opacity="0.55"/><rect x="403.8" y="161.0" width="2.1" height="1.4" fill="#333" opacity="0.55"/><rect x="407.2" y="161.0" width="3.3" height="1.4" fill="#333" opacity="0.55"/><rect x="411.5" y="161.0" width="4.5" height="1.4" fill="#333" opacity="0.55"/><rect x="377.0" y="164.0" width="3.1" height="1.4" fill="#333" opacity="0.55"/><rect x="381.0" y="164.0" width="2.0" height="1.4" fill="#333" opacity="0.55"/><rect x="383.9" y="164.0" width="2.7" height="1.4" fill="#333" opacity="0.55"/><rect x="387.4" y="164.0" width="2.2" height="1.4" fill="#333" opacity="0.55"/><rect x="390.6" y="164.0" width="3.6" height="1.4" fill="#333" opacity="0.55"/><rect x="395.6" y="164.0" width="4.4" height="1.4" fill="#333" opacity="0.55"/><rect x="401.1" y="164.0" width="3.0" height="1.4" fill="#333" opacity="0.55"/><rect x="405.2" y="164.0" width="2.8" height="1.4" fill="#333" opacity="0.55"/><rect x="409.0" y="164.0" width="1.5" height="1.4" fill="#333" opacity="0.55"/><rect x="411.4" y="164.0" width="4.6" height="1.4" fill="#333" opacity="0.55"/><rect x="377.0" y="166.9" width="3.4" height="1.4" fill="#333" opacity="0.55"/><rect x="381.5" y="166.9" width="4.9" height="1.4" fill="#333" opacity="0.55"/><rect x="387.4" y="166.9" width="2.4" height="1.4" fill="#333" opacity="0.55"/><rect x="390.7" y="166.9" width="2.9" height="1.4" fill="#333" opacity="0.55"/><rect x="394.7" y="166.9" width="5.3" height="1.4" fill="#333" opacity="0.55"/><rect x="401.3" y="166.9" width="5.0" height="1.4" fill="#333" opacity="0.55"/><rect x="407.1" y="166.9" width="1.3" height="1.4" fill="#333" opacity="0.55"/><rect x="409.6" y="166.9" width="5.1" height="1.4" fill="#333" opacity="0.55"/><rect x="377.0" y="169.9" width="3.7" height="1.4" fill="#333" opacity="0.55"/><rect x="381.5" y="169.9" width="2.9" height="1.4" fill="#333" opacity="0.55"/><rect x="385.8" y="169.9" width="4.8" height="1.4" fill="#333" opacity="0.55"/><rect x="391.8" y="169.9" width="5.4" height="1.4" fill="#333" opacity="0.55"/><rect x="398.2" y="169.9" width="1.7" height="1.4" fill="#333" opacity="0.55"/><rect x="400.7" y="169.9" width="3.4" height="1.4" fill="#333" opacity="0.55"/><rect x="405.4" y="169.9" width="5.2" height="1.4" fill="#333" opacity="0.55"/><rect x="411.9" y="169.9" width="4.0" height="1.4" fill="#333" opacity="0.55"/><rect x="377.0" y="172.9" width="3.2" height="1.4" fill="#333" opacity="0.55"/><rect x="381.3" y="172.9" width="1.4" height="1.4" fill="#333" opacity="0.55"/><rect x="383.9" y="172.9" width="2.2" height="1.4" fill="#333" opacity="0.55"/><rect x="387.5" y="172.9" width="4.0" height="1.4" fill="#333" opacity="0.55"/><rect x="392.4" y="172.9" width="1.8" height="1.4" fill="#333" opacity="0.55"/><rect x="395.1" y="172.9" width="3.9" height="1.4" fill="#333" opacity="0.55"/><rect x="400.3" y="172.9" width="1.7" height="1.4" fill="#333" opacity="0.55"/><rect x="402.8" y="172.9" width="3.5" height="1.4" fill="#333" opacity="0.55"/><rect x="407.4" y="172.9" width="2.9" height="1.4" fill="#333" opacity="0.55"/><rect x="411.2" y="172.9" width="3.8" height="1.4" fill="#333" opacity="0.55"/><rect x="377.0" y="175.9" width="2.5" height="1.4" fill="#333" opacity="0.55"/><rect x="380.6" y="175.9" width="4.2" height="1.4" fill="#333" opacity="0.55"/><rect x="399.3" y="173" width="10" height="1.3" fill="#f0a347"/><rect x="377.0" y="180.6" width="5.0" height="1.4" fill="#111" opacity="0.8"/><rect x="383.1" y="180.6" width="2.2" height="1.4" fill="#111" opacity="0.8"/><rect x="386.2" y="180.6" width="5.3" height="1.4" fill="#111" opacity="0.8"/><rect x="392.8" y="180.6" width="2.5" height="1.4" fill="#111" opacity="0.8"/><rect x="396.1" y="180.6" width="3.3" height="1.4" fill="#111" opacity="0.8"/><rect x="400.7" y="180.6" width="3.0" height="1.4" fill="#111" opacity="0.8"/><rect x="404.6" y="180.6" width="4.1" height="1.4" fill="#111" opacity="0.8"/><rect x="410.1" y="180.6" width="2.2" height="1.4" fill="#111" opacity="0.8"/><rect x="413.1" y="180.6" width="2.7" height="1.4" fill="#111" opacity="0.8"/><rect x="377.0" y="183.6" width="4.1" height="1.4" fill="#333" opacity="0.55"/><rect x="382.1" y="183.6" width="4.6" height="1.4" fill="#333" opacity="0.55"/><rect x="387.9" y="183.6" width="3.4" height="1.4" fill="#333" opacity="0.55"/><rect x="392.2" y="183.6" width="5.4" height="1.4" fill="#333" opacity="0.55"/><rect x="398.6" y="183.6" width="4.7" height="1.4" fill="#333" opacity="0.55"/><rect x="404.2" y="183.6" width="2.2" height="1.4" fill="#333" opacity="0.55"/><rect x="407.6" y="183.6" width="2.5" height="1.4" fill="#333" opacity="0.55"/><rect x="411.5" y="183.6" width="3.3" height="1.4" fill="#333" opacity="0.55"/><rect x="377.0" y="186.6" width="2.2" height="1.4" fill="#333" opacity="0.55"/><rect x="380.2" y="186.6" width="4.1" height="1.4" fill="#333" opacity="0.55"/><rect x="385.6" y="186.6" width="1.8" height="1.4" fill="#333" opacity="0.55"/><rect x="388.5" y="186.6" width="2.1" height="1.4" fill="#333" opacity="0.55"/><rect x="392.0" y="186.6" width="1.8" height="1.4" fill="#333" opacity="0.55"/><rect x="394.6" y="186.6" width="1.5" height="1.4" fill="#333" opacity="0.55"/><rect x="397.1" y="186.6" width="5.1" height="1.4" fill="#333" opacity="0.55"/><rect x="403.5" y="186.6" width="4.4" height="1.4" fill="#333" opacity="0.55"/><rect x="409.3" y="186.6" width="5.2" height="1.4" fill="#333" opacity="0.55"/><rect x="415.5" y="186.6" width="1.0" height="1.4" fill="#333" opacity="0.55"/><rect x="377.0" y="189.5" width="4.4" height="1.4" fill="#333" opacity="0.55"/><rect x="382.2" y="189.5" width="4.1" height="1.4" fill="#333" opacity="0.55"/><rect x="387.3" y="189.5" width="2.8" height="1.4" fill="#333" opacity="0.55"/><rect x="391.1" y="189.5" width="1.9" height="1.4" fill="#333" opacity="0.55"/><rect x="393.8" y="189.5" width="2.4" height="1.4" fill="#333" opacity="0.55"/><rect x="397.3" y="189.5" width="5.3" height="1.4" fill="#333" opacity="0.55"/><rect x="403.4" y="189.5" width="5.3" height="1.4" fill="#333" opacity="0.55"/><rect x="409.7" y="189.5" width="2.7" height="1.4" fill="#333" opacity="0.55"/><rect x="413.7" y="189.5" width="2.8" height="1.4" fill="#333" opacity="0.55"/><rect x="377.0" y="192.5" width="1.4" height="1.4" fill="#333" opacity="0.55"/><rect x="379.5" y="192.5" width="2.8" height="1.4" fill="#333" opacity="0.55"/><rect x="383.7" y="192.5" width="2.0" height="1.4" fill="#333" opacity="0.55"/><rect x="386.7" y="192.5" width="5.1" height="1.4" fill="#333" opacity="0.55"/><rect x="392.6" y="192.5" width="3.0" height="1.4" fill="#333" opacity="0.55"/><rect x="396.8" y="192.5" width="4.5" height="1.4" fill="#333" opacity="0.55"/><rect x="402.1" y="192.5" width="1.3" height="1.4" fill="#333" opacity="0.55"/><rect x="404.3" y="192.5" width="5.2" height="1.4" fill="#333" opacity="0.55"/><rect x="410.4" y="192.5" width="4.4" height="1.4" fill="#333" opacity="0.55"/><rect x="377.0" y="195.5" width="2.7" height="1.4" fill="#333" opacity="0.55"/><rect x="380.6" y="195.5" width="5.3" height="1.4" fill="#333" opacity="0.55"/><rect x="387.1" y="195.5" width="2.3" height="1.4" fill="#333" opacity="0.55"/><rect x="390.7" y="195.5" width="2.6" height="1.4" fill="#333" opacity="0.55"/><rect x="394.2" y="195.5" width="1.2" height="1.4" fill="#333" opacity="0.55"/><rect x="396.7" y="195.5" width="5.1" height="1.4" fill="#333" opacity="0.55"/><rect x="403.0" y="195.5" width="5.3" height="1.4" fill="#333" opacity="0.55"/><rect x="409.1" y="195.5" width="2.2" height="1.4" fill="#333" opacity="0.55"/><rect x="412.3" y="195.5" width="4.2" height="1.4" fill="#333" opacity="0.55"/><rect x="377.0" y="198.5" width="2.9" height="1.4" fill="#333" opacity="0.55"/><rect x="380.8" y="198.5" width="3.0" height="1.4" fill="#333" opacity="0.55"/><rect x="385.0" y="198.5" width="5.2" height="1.4" fill="#333" opacity="0.55"/><rect x="391.1" y="198.5" width="4.7" height="1.4" fill="#333" opacity="0.55"/><rect x="397.0" y="198.5" width="4.7" height="1.4" fill="#333" opacity="0.55"/><rect x="403.0" y="198.5" width="3.8" height="1.4" fill="#333" opacity="0.55"/><rect x="407.8" y="198.5" width="2.6" height="1.4" fill="#333" opacity="0.55"/><rect x="411.4" y="198.5" width="4.6" height="1.4" fill="#333" opacity="0.55"/><rect x="377.0" y="201.5" width="2.0" height="1.4" fill="#333" opacity="0.55"/><rect x="380.3" y="201.5" width="2.3" height="1.4" fill="#333" opacity="0.55"/><rect x="383.4" y="201.5" width="1.3" height="1.4" fill="#333" opacity="0.55"/><rect x="385.9" y="201.5" width="2.6" height="1.4" fill="#333" opacity="0.55"/><rect x="389.9" y="201.5" width="5.0" height="1.4" fill="#333" opacity="0.55"/><rect x="396.3" y="201.5" width="2.3" height="1.4" fill="#333" opacity="0.55"/><rect x="399.4" y="201.5" width="1.6" height="1.4" fill="#333" opacity="0.55"/><rect x="402.2" y="201.5" width="4.3" height="1.4" fill="#333" opacity="0.55"/><rect x="407.5" y="201.5" width="2.2" height="1.4" fill="#333" opacity="0.55"/><rect x="410.7" y="201.5" width="3.9" height="1.4" fill="#333" opacity="0.55"/><rect x="377.0" y="204.4" width="4.4" height="1.4" fill="#333" opacity="0.55"/><rect x="382.7" y="204.4" width="4.1" height="1.4" fill="#333" opacity="0.55"/><rect x="387.7" y="204.4" width="4.8" height="1.4" fill="#333" opacity="0.55"/><rect x="393.4" y="204.4" width="3.6" height="1.4" fill="#333" opacity="0.55"/><rect x="398.1" y="204.4" width="4.4" height="1.4" fill="#333" opacity="0.55"/><rect x="403.4" y="204.4" width="2.3" height="1.4" fill="#333" opacity="0.55"/><rect x="406.6" y="204.4" width="1.9" height="1.4" fill="#333" opacity="0.55"/><rect x="409.8" y="204.4" width="3.7" height="1.4" fill="#333" opacity="0.55"/><rect x="414.5" y="204.4" width="2.0" height="1.4" fill="#333" opacity="0.55"/><rect x="377.0" y="207.4" width="3.4" height="1.4" fill="#333" opacity="0.55"/><rect x="381.3" y="207.4" width="4.7" height="1.4" fill="#333" opacity="0.55"/><rect x="387.2" y="207.4" width="5.5" height="1.4" fill="#333" opacity="0.55"/><rect x="393.5" y="207.4" width="3.2" height="1.4" fill="#333" opacity="0.55"/><rect x="398.0" y="207.4" width="4.8" height="1.4" fill="#333" opacity="0.55"/><rect x="404.2" y="207.4" width="1.4" height="1.4" fill="#333" opacity="0.55"/><rect x="406.6" y="207.4" width="1.7" height="1.4" fill="#333" opacity="0.55"/><rect x="409.2" y="207.4" width="5.4" height="1.4" fill="#333" opacity="0.55"/><rect x="377.0" y="210.4" width="5.2" height="1.4" fill="#333" opacity="0.55"/><rect x="383.2" y="210.4" width="4.9" height="1.4" fill="#333" opacity="0.55"/><rect x="389.2" y="210.4" width="2.3" height="1.4" fill="#333" opacity="0.55"/><rect x="392.8" y="210.4" width="5.3" height="1.4" fill="#333" opacity="0.55"/><rect x="398.9" y="210.4" width="3.8" height="1.4" fill="#333" opacity="0.55"/><rect x="403.9" y="210.4" width="2.1" height="1.4" fill="#333" opacity="0.55"/><rect x="407.0" y="210.4" width="1.8" height="1.4" fill="#333" opacity="0.55"/><rect x="409.8" y="210.4" width="2.3" height="1.4" fill="#333" opacity="0.55"/><rect x="377.0" y="215.5" width="4.0" height="1.4" fill="#111" opacity="0.8"/><rect x="381.9" y="215.5" width="1.2" height="1.4" fill="#111" opacity="0.8"/><rect x="384.2" y="215.5" width="4.1" height="1.4" fill="#111" opacity="0.8"/><rect x="389.2" y="215.5" width="2.5" height="1.4" fill="#111" opacity="0.8"/><rect x="392.7" y="215.5" width="4.6" height="1.4" fill="#111" opacity="0.8"/><rect x="398.4" y="215.5" width="1.5" height="1.4" fill="#111" opacity="0.8"/><rect x="400.7" y="215.5" width="2.9" height="1.4" fill="#111" opacity="0.8"/><rect x="404.8" y="215.5" width="3.9" height="1.4" fill="#111" opacity="0.8"/><rect x="409.6" y="215.5" width="1.9" height="1.4" fill="#111" opacity="0.8"/><rect x="412.7" y="215.5" width="3.0" height="1.4" fill="#111" opacity="0.8"/><rect x="377.0" y="218.5" width="2.5" height="1.4" fill="#333" opacity="0.55"/><rect x="380.9" y="218.5" width="2.5" height="1.4" fill="#333" opacity="0.55"/><rect x="384.6" y="218.5" width="2.7" height="1.4" fill="#333" opacity="0.55"/><rect x="388.4" y="218.5" width="4.9" height="1.4" fill="#333" opacity="0.55"/><rect x="394.7" y="218.5" width="2.8" height="1.4" fill="#333" opacity="0.55"/><rect x="398.4" y="218.5" width="4.3" height="1.4" fill="#333" opacity="0.55"/><rect x="403.6" y="218.5" width="1.2" height="1.4" fill="#333" opacity="0.55"/><rect x="406.2" y="218.5" width="3.0" height="1.4" fill="#333" opacity="0.55"/><rect x="410.5" y="218.5" width="2.9" height="1.4" fill="#333" opacity="0.55"/><rect x="414.8" y="218.5" width="1.7" height="1.4" fill="#333" opacity="0.55"/><rect x="377.0" y="221.5" width="1.3" height="1.4" fill="#333" opacity="0.55"/><rect x="379.4" y="221.5" width="4.0" height="1.4" fill="#333" opacity="0.55"/><rect x="384.7" y="221.5" width="1.6" height="1.4" fill="#333" opacity="0.55"/><rect x="387.5" y="221.5" width="2.8" height="1.4" fill="#333" opacity="0.55"/><rect x="391.3" y="221.5" width="1.8" height="1.4" fill="#333" opacity="0.55"/><rect x="394.1" y="221.5" width="3.4" height="1.4" fill="#333" opacity="0.55"/><rect x="398.9" y="221.5" width="1.7" height="1.4" fill="#333" opacity="0.55"/><rect x="401.7" y="221.5" width="4.7" height="1.4" fill="#333" opacity="0.55"/><rect x="407.7" y="221.5" width="2.0" height="1.4" fill="#333" opacity="0.55"/><rect x="410.7" y="221.5" width="5.3" height="1.4" fill="#333" opacity="0.55"/><rect x="377.0" y="224.4" width="3.3" height="1.4" fill="#333" opacity="0.55"/><rect x="381.1" y="224.4" width="5.2" height="1.4" fill="#333" opacity="0.55"/><rect x="387.3" y="224.4" width="5.1" height="1.4" fill="#333" opacity="0.55"/><rect x="393.6" y="224.4" width="4.7" height="1.4" fill="#333" opacity="0.55"/><rect x="399.2" y="224.4" width="4.6" height="1.4" fill="#333" opacity="0.55"/><rect x="404.7" y="224.4" width="2.9" height="1.4" fill="#333" opacity="0.55"/><rect x="409.0" y="224.4" width="4.8" height="1.4" fill="#333" opacity="0.55"/><rect x="414.7" y="224.4" width="1.8" height="1.4" fill="#333" opacity="0.55"/><rect x="377.0" y="227.4" width="3.4" height="1.4" fill="#333" opacity="0.55"/><rect x="381.5" y="227.4" width="1.7" height="1.4" fill="#333" opacity="0.55"/><rect x="384.1" y="227.4" width="4.3" height="1.4" fill="#333" opacity="0.55"/><rect x="389.8" y="227.4" width="1.4" height="1.4" fill="#333" opacity="0.55"/><rect x="392.3" y="227.4" width="4.5" height="1.4" fill="#333" opacity="0.55"/><rect x="397.6" y="227.4" width="4.8" height="1.4" fill="#333" opacity="0.55"/><rect x="403.3" y="227.4" width="3.8" height="1.4" fill="#333" opacity="0.55"/><rect x="408.2" y="227.4" width="3.9" height="1.4" fill="#333" opacity="0.55"/><rect x="413.0" y="227.4" width="3.0" height="1.4" fill="#333" opacity="0.55"/><rect x="377.0" y="230.4" width="3.0" height="1.4" fill="#333" opacity="0.55"/><rect x="381.2" y="230.4" width="3.1" height="1.4" fill="#333" opacity="0.55"/><rect x="385.4" y="230.4" width="1.3" height="1.4" fill="#333" opacity="0.55"/><rect x="387.9" y="230.4" width="3.3" height="1.4" fill="#333" opacity="0.55"/><rect x="392.1" y="230.4" width="4.5" height="1.4" fill="#333" opacity="0.55"/><rect x="397.9" y="230.4" width="3.2" height="1.4" fill="#333" opacity="0.55"/><rect x="402.0" y="230.4" width="3.2" height="1.4" fill="#333" opacity="0.55"/><rect x="406.1" y="230.4" width="1.8" height="1.4" fill="#333" opacity="0.55"/><rect x="408.9" y="230.4" width="1.6" height="1.4" fill="#333" opacity="0.55"/><rect x="411.5" y="230.4" width="3.4" height="1.4" fill="#333" opacity="0.55"/><rect x="377.0" y="233.4" width="3.9" height="1.4" fill="#333" opacity="0.55"/><rect x="381.8" y="233.4" width="4.4" height="1.4" fill="#333" opacity="0.55"/><rect x="387.4" y="233.4" width="3.4" height="1.4" fill="#333" opacity="0.55"/><rect x="391.6" y="233.4" width="3.4" height="1.4" fill="#333" opacity="0.55"/><rect x="396.0" y="233.4" width="5.3" height="1.4" fill="#333" opacity="0.55"/><rect x="402.2" y="233.4" width="4.9" height="1.4" fill="#333" opacity="0.55"/><rect x="408.5" y="233.4" width="4.3" height="1.4" fill="#333" opacity="0.55"/><rect x="414.1" y="233.4" width="2.0" height="1.4" fill="#333" opacity="0.55"/><rect x="377.0" y="236.4" width="3.3" height="1.4" fill="#333" opacity="0.55"/><rect x="381.7" y="236.4" width="5.1" height="1.4" fill="#333" opacity="0.55"/><rect x="387.7" y="236.4" width="4.6" height="1.4" fill="#333" opacity="0.55"/><rect x="393.7" y="236.4" width="1.5" height="1.4" fill="#333" opacity="0.55"/><rect x="396.2" y="236.4" width="4.5" height="1.4" fill="#333" opacity="0.55"/><rect x="401.5" y="236.4" width="5.1" height="1.4" fill="#333" opacity="0.55"/><rect x="407.5" y="236.4" width="4.7" height="1.4" fill="#333" opacity="0.55"/><rect x="413.1" y="236.4" width="3.4" height="1.4" fill="#333" opacity="0.55"/><rect x="377.0" y="239.3" width="2.1" height="1.4" fill="#333" opacity="0.55"/><rect x="380.1" y="239.3" width="3.4" height="1.4" fill="#333" opacity="0.55"/><rect x="384.4" y="239.3" width="1.4" height="1.4" fill="#333" opacity="0.55"/><rect x="386.7" y="239.3" width="1.9" height="1.4" fill="#333" opacity="0.55"/><rect x="389.9" y="239.3" width="4.1" height="1.4" fill="#333" opacity="0.55"/><rect x="395.4" y="239.3" width="1.9" height="1.4" fill="#333" opacity="0.55"/><rect x="398.6" y="239.3" width="1.7" height="1.4" fill="#333" opacity="0.55"/><rect x="401.4" y="239.3" width="3.9" height="1.4" fill="#333" opacity="0.55"/><rect x="406.4" y="239.3" width="5.0" height="1.4" fill="#333" opacity="0.55"/><rect x="412.5" y="239.3" width="3.7" height="1.4" fill="#333" opacity="0.55"/><rect x="377.0" y="242.3" width="1.6" height="1.4" fill="#333" opacity="0.55"/><rect x="380.0" y="242.3" width="3.9" height="1.4" fill="#333" opacity="0.55"/><rect x="385.0" y="242.3" width="4.6" height="1.4" fill="#333" opacity="0.55"/><rect x="390.6" y="242.3" width="5.5" height="1.4" fill="#333" opacity="0.55"/><rect x="397.2" y="242.3" width="2.7" height="1.4" fill="#333" opacity="0.55"/><rect x="401.2" y="242.3" width="3.1" height="1.4" fill="#333" opacity="0.55"/><rect x="405.2" y="242.3" width="4.4" height="1.4" fill="#333" opacity="0.55"/><rect x="410.4" y="242.3" width="4.7" height="1.4" fill="#333" opacity="0.55"/><rect x="377.0" y="245.3" width="3.9" height="1.4" fill="#333" opacity="0.55"/><rect x="382.3" y="245.3" width="3.7" height="1.4" fill="#333" opacity="0.55"/><rect x="387.3" y="245.3" width="2.5" height="1.4" fill="#333" opacity="0.55"/><rect x="390.6" y="245.3" width="1.3" height="1.4" fill="#333" opacity="0.55"/><rect x="392.8" y="245.3" width="3.8" height="1.4" fill="#333" opacity="0.55"/><rect x="397.7" y="245.3" width="3.4" height="1.4" fill="#333" opacity="0.55"/><rect x="402.5" y="245.3" width="1.8" height="1.4" fill="#333" opacity="0.55"/><rect x="405.2" y="245.3" width="4.0" height="1.4" fill="#333" opacity="0.55"/><rect x="410.0" y="245.3" width="1.2" height="1.4" fill="#333" opacity="0.55"/><rect x="412.2" y="245.3" width="1.7" height="1.4" fill="#333" opacity="0.55"/><rect x="414.9" y="245.3" width="1.6" height="1.4" fill="#333" opacity="0.55"/><rect x="377.0" y="248.3" width="3.7" height="1.4" fill="#333" opacity="0.55"/><rect x="381.7" y="248.3" width="3.9" height="1.4" fill="#333" opacity="0.55"/><rect x="386.6" y="248.3" width="1.8" height="1.4" fill="#333" opacity="0.55"/><rect x="389.8" y="248.3" width="2.2" height="1.4" fill="#333" opacity="0.55"/><rect x="392.9" y="248.3" width="1.6" height="1.4" fill="#333" opacity="0.55"/><rect x="395.7" y="248.3" width="4.9" height="1.4" fill="#333" opacity="0.55"/><rect x="401.9" y="248.3" width="2.9" height="1.4" fill="#333" opacity="0.55"/><rect x="405.8" y="248.3" width="1.2" height="1.4" fill="#333" opacity="0.55"/><rect x="408.2" y="248.3" width="3.6" height="1.4" fill="#333" opacity="0.55"/><rect x="412.9" y="248.3" width="3.6" height="1.4" fill="#333" opacity="0.55"/><rect x="377.0" y="251.3" width="5.2" height="1.4" fill="#333" opacity="0.55"/><rect x="383.5" y="251.3" width="2.3" height="1.4" fill="#333" opacity="0.55"/><rect x="387.1" y="251.3" width="1.4" height="1.4" fill="#333" opacity="0.55"/><rect x="389.6" y="251.3" width="2.9" height="1.4" fill="#333" opacity="0.55"/><rect x="393.5" y="251.3" width="1.5" height="1.4" fill="#333" opacity="0.55"/><rect x="396.2" y="251.3" width="1.3" height="1.4" fill="#333" opacity="0.55"/><rect x="398.6" y="251.3" width="5.2" height="1.4" fill="#333" opacity="0.55"/><rect x="404.7" y="251.3" width="2.1" height="1.4" fill="#333" opacity="0.55"/><rect x="407.9" y="251.3" width="3.4" height="1.4" fill="#333" opacity="0.55"/><rect x="412.5" y="251.3" width="4.0" height="1.4" fill="#333" opacity="0.55"/><rect x="377.0" y="254.2" width="2.5" height="1.4" fill="#333" opacity="0.55"/><rect x="380.5" y="254.2" width="1.4" height="1.4" fill="#333" opacity="0.55"/><rect x="383.3" y="254.2" width="4.6" height="1.4" fill="#333" opacity="0.55"/><rect x="389.0" y="254.2" width="1.2" height="1.4" fill="#333" opacity="0.55"/><rect x="391.6" y="254.2" width="4.4" height="1.4" fill="#333" opacity="0.55"/><rect x="397.1" y="254.2" width="4.4" height="1.4" fill="#333" opacity="0.55"/><rect x="402.5" y="254.2" width="2.2" height="1.4" fill="#333" opacity="0.55"/><rect x="405.6" y="254.2" width="2.2" height="1.4" fill="#333" opacity="0.55"/><rect x="408.6" y="254.2" width="2.6" height="1.4" fill="#333" opacity="0.55"/><rect x="412.5" y="254.2" width="4.0" height="1.4" fill="#333" opacity="0.55"/><rect x="377.0" y="257.2" width="4.3" height="1.4" fill="#333" opacity="0.55"/><rect x="382.2" y="257.2" width="3.6" height="1.4" fill="#333" opacity="0.55"/><rect x="386.9" y="257.2" width="4.6" height="1.4" fill="#333" opacity="0.55"/><rect x="392.6" y="257.2" width="2.3" height="1.4" fill="#333" opacity="0.55"/><rect x="396.1" y="257.2" width="5.4" height="1.4" fill="#333" opacity="0.55"/><rect x="402.4" y="257.2" width="5.0" height="1.4" fill="#333" opacity="0.55"/><rect x="408.2" y="257.2" width="2.3" height="1.4" fill="#333" opacity="0.55"/><rect x="411.4" y="257.2" width="4.4" height="1.4" fill="#333" opacity="0.55"/><rect x="377.0" y="260.2" width="4.4" height="1.4" fill="#333" opacity="0.55"/><rect x="382.4" y="260.2" width="5.0" height="1.4" fill="#333" opacity="0.55"/><rect x="388.4" y="260.2" width="2.2" height="1.4" fill="#333" opacity="0.55"/><rect x="392.0" y="260.2" width="3.9" height="1.4" fill="#333" opacity="0.55"/><rect x="397.1" y="260.2" width="4.1" height="1.4" fill="#333" opacity="0.55"/><rect x="402.5" y="260.2" width="3.2" height="1.4" fill="#333" opacity="0.55"/><rect x="407.1" y="260.2" width="4.2" height="1.4" fill="#333" opacity="0.55"/><rect x="412.6" y="260.2" width="3.1" height="1.4" fill="#333" opacity="0.55"/><rect x="377.0" y="263.2" width="3.7" height="1.4" fill="#333" opacity="0.55"/><rect x="381.6" y="263.2" width="2.1" height="1.4" fill="#333" opacity="0.55"/><rect x="384.9" y="263.2" width="1.5" height="1.4" fill="#333" opacity="0.55"/><rect x="387.8" y="263.2" width="1.8" height="1.4" fill="#333" opacity="0.55"/><rect x="390.4" y="263.2" width="1.7" height="1.4" fill="#333" opacity="0.55"/><rect x="393.5" y="263.2" width="2.7" height="1.4" fill="#333" opacity="0.55"/><rect x="397.0" y="263.2" width="1.3" height="1.4" fill="#333" opacity="0.55"/><rect x="399.2" y="263.2" width="4.2" height="1.4" fill="#333" opacity="0.55"/><rect x="404.5" y="263.2" width="4.2" height="1.4" fill="#333" opacity="0.55"/><rect x="410.0" y="263.2" width="1.5" height="1.4" fill="#333" opacity="0.55"/><rect x="412.6" y="263.2" width="2.8" height="1.4" fill="#333" opacity="0.55"/><rect x="377.0" y="266.2" width="4.7" height="1.4" fill="#333" opacity="0.55"/><rect x="383.1" y="266.2" width="1.5" height="1.4" fill="#333" opacity="0.55"/><rect x="385.9" y="266.2" width="5.1" height="1.4" fill="#333" opacity="0.55"/><rect x="392.4" y="266.2" width="1.7" height="1.4" fill="#333" opacity="0.55"/><rect x="394.9" y="266.2" width="1.7" height="1.4" fill="#333" opacity="0.55"/><rect x="397.4" y="266.2" width="4.8" height="1.4" fill="#333" opacity="0.55"/><rect x="403.6" y="266.2" width="3.9" height="1.4" fill="#333" opacity="0.55"/><rect x="408.8" y="266.2" width="3.9" height="1.4" fill="#333" opacity="0.55"/><rect x="413.7" y="266.2" width="1.6" height="1.4" fill="#333" opacity="0.55"/><rect x="377.0" y="269.1" width="4.5" height="1.4" fill="#333" opacity="0.55"/><rect x="382.4" y="269.1" width="2.6" height="1.4" fill="#333" opacity="0.55"/><rect x="386.0" y="269.1" width="1.3" height="1.4" fill="#333" opacity="0.55"/><rect x="388.3" y="269.1" width="2.4" height="1.4" fill="#333" opacity="0.55"/><rect x="391.9" y="269.1" width="2.8" height="1.4" fill="#333" opacity="0.55"/><rect x="395.7" y="269.1" width="5.3" height="1.4" fill="#333" opacity="0.55"/><rect x="402.1" y="269.1" width="4.9" height="1.4" fill="#333" opacity="0.55"/><rect x="408.1" y="269.1" width="1.3" height="1.4" fill="#333" opacity="0.55"/><rect x="410.5" y="269.1" width="3.1" height="1.4" fill="#333" opacity="0.55"/><rect x="414.9" y="269.1" width="1.6" height="1.4" fill="#333" opacity="0.55"/><rect x="377.0" y="272.1" width="3.5" height="1.4" fill="#333" opacity="0.55"/><rect x="381.4" y="272.1" width="4.9" height="1.4" fill="#333" opacity="0.55"/><rect x="387.2" y="272.1" width="4.7" height="1.4" fill="#333" opacity="0.55"/><rect x="392.8" y="272.1" width="1.2" height="1.4" fill="#333" opacity="0.55"/><rect x="395.0" y="272.1" width="4.5" height="1.4" fill="#333" opacity="0.55"/><rect x="400.8" y="272.1" width="1.2" height="1.4" fill="#333" opacity="0.55"/><rect x="403.1" y="272.1" width="3.3" height="1.4" fill="#333" opacity="0.55"/><rect x="407.7" y="272.1" width="2.0" height="1.4" fill="#333" opacity="0.55"/><rect x="410.8" y="272.1" width="2.7" height="1.4" fill="#333" opacity="0.55"/><rect x="414.8" y="272.1" width="1.7" height="1.4" fill="#333" opacity="0.55"/><rect x="377.0" y="275.1" width="2.4" height="1.4" fill="#333" opacity="0.55"/><rect x="380.3" y="275.1" width="4.2" height="1.4" fill="#333" opacity="0.55"/><rect x="385.7" y="275.1" width="1.7" height="1.4" fill="#333" opacity="0.55"/><rect x="388.5" y="275.1" width="1.5" height="1.4" fill="#333" opacity="0.55"/><rect x="391.3" y="275.1" width="4.2" height="1.4" fill="#333" opacity="0.55"/><rect x="396.8" y="275.1" width="3.9" height="1.4" fill="#333" opacity="0.55"/><rect x="401.7" y="275.1" width="2.9" height="1.4" fill="#333" opacity="0.55"/><rect x="405.7" y="275.1" width="5.0" height="1.4" fill="#333" opacity="0.55"/><rect x="411.6" y="275.1" width="4.9" height="1.4" fill="#333" opacity="0.55"/><rect x="377.0" y="278.1" width="2.1" height="1.4" fill="#333" opacity="0.55"/><rect x="380.0" y="278.1" width="5.1" height="1.4" fill="#333" opacity="0.55"/><rect x="386.2" y="278.1" width="2.8" height="1.4" fill="#333" opacity="0.55"/><rect x="390.4" y="278.1" width="2.2" height="1.4" fill="#333" opacity="0.55"/><rect x="393.7" y="278.1" width="3.5" height="1.4" fill="#333" opacity="0.55"/><rect x="398.4" y="278.1" width="4.4" height="1.4" fill="#333" opacity="0.55"/><rect x="383" y="236.3" width="8" height="2.6" fill="#111"/><rect x="579.0" y="158.0" width="2.7" height="1.4" fill="#333" opacity="0.55"/><rect x="582.7" y="158.0" width="1.9" height="1.4" fill="#333" opacity="0.55"/><rect x="585.9" y="158.0" width="4.0" height="1.4" fill="#333" opacity="0.55"/><rect x="591.2" y="158.0" width="1.9" height="1.4" fill="#333" opacity="0.55"/><rect x="594.2" y="158.0" width="4.5" height="1.4" fill="#333" opacity="0.55"/><rect x="599.8" y="158.0" width="1.7" height="1.4" fill="#333" opacity="0.55"/><rect x="602.6" y="158.0" width="5.0" height="1.4" fill="#333" opacity="0.55"/><rect x="608.6" y="158.0" width="2.0" height="1.4" fill="#333" opacity="0.55"/><rect x="611.6" y="158.0" width="4.2" height="1.4" fill="#333" opacity="0.55"/><rect x="617.1" y="158.0" width="1.9" height="1.4" fill="#333" opacity="0.55"/><rect x="579.0" y="161.0" width="2.3" height="1.4" fill="#333" opacity="0.55"/><rect x="582.3" y="161.0" width="3.4" height="1.4" fill="#333" opacity="0.55"/><rect x="586.6" y="161.0" width="2.6" height="1.4" fill="#333" opacity="0.55"/><rect x="590.1" y="161.0" width="5.4" height="1.4" fill="#333" opacity="0.55"/><rect x="596.8" y="161.0" width="1.6" height="1.4" fill="#333" opacity="0.55"/><rect x="599.8" y="161.0" width="1.6" height="1.4" fill="#333" opacity="0.55"/><rect x="602.4" y="161.0" width="5.4" height="1.4" fill="#333" opacity="0.55"/><rect x="609.1" y="161.0" width="4.3" height="1.4" fill="#333" opacity="0.55"/><rect x="579.0" y="165.4" width="2.0" height="1.4" fill="#111" opacity="0.8"/><rect x="582.2" y="165.4" width="1.7" height="1.4" fill="#111" opacity="0.8"/><rect x="584.8" y="165.4" width="2.9" height="1.4" fill="#111" opacity="0.8"/><rect x="588.5" y="165.4" width="2.9" height="1.4" fill="#111" opacity="0.8"/><rect x="592.7" y="165.4" width="4.2" height="1.4" fill="#111" opacity="0.8"/><rect x="598.0" y="165.4" width="3.9" height="1.4" fill="#111" opacity="0.8"/><rect x="603.0" y="165.4" width="1.8" height="1.4" fill="#111" opacity="0.8"/><rect x="605.9" y="165.4" width="2.9" height="1.4" fill="#111" opacity="0.8"/><rect x="610.1" y="165.4" width="5.1" height="1.4" fill="#111" opacity="0.8"/><rect x="616.3" y="165.4" width="3.2" height="1.4" fill="#111" opacity="0.8"/><rect x="579.0" y="168.4" width="3.0" height="1.4" fill="#333" opacity="0.55"/><rect x="582.9" y="168.4" width="4.3" height="1.4" fill="#333" opacity="0.55"/><rect x="588.6" y="168.4" width="4.5" height="1.4" fill="#333" opacity="0.55"/><rect x="594.3" y="168.4" width="4.9" height="1.4" fill="#333" opacity="0.55"/><rect x="600.4" y="168.4" width="4.0" height="1.4" fill="#333" opacity="0.55"/><rect x="605.4" y="168.4" width="2.5" height="1.4" fill="#333" opacity="0.55"/><rect x="609.2" y="168.4" width="1.6" height="1.4" fill="#333" opacity="0.55"/><rect x="611.8" y="168.4" width="4.6" height="1.4" fill="#333" opacity="0.55"/><rect x="617.6" y="168.4" width="1.9" height="1.4" fill="#333" opacity="0.55"/><rect x="579.0" y="171.4" width="3.0" height="1.4" fill="#333" opacity="0.55"/><rect x="583.1" y="171.4" width="3.9" height="1.4" fill="#333" opacity="0.55"/><rect x="588.0" y="171.4" width="4.1" height="1.4" fill="#333" opacity="0.55"/><rect x="593.5" y="171.4" width="2.0" height="1.4" fill="#333" opacity="0.55"/><rect x="596.7" y="171.4" width="4.5" height="1.4" fill="#333" opacity="0.55"/><rect x="602.2" y="171.4" width="3.3" height="1.4" fill="#333" opacity="0.55"/><rect x="606.9" y="171.4" width="1.4" height="1.4" fill="#333" opacity="0.55"/><rect x="609.4" y="171.4" width="1.9" height="1.4" fill="#333" opacity="0.55"/><rect x="612.6" y="171.4" width="5.2" height="1.4" fill="#333" opacity="0.55"/><rect x="579.0" y="174.3" width="1.6" height="1.4" fill="#333" opacity="0.55"/><rect x="581.8" y="174.3" width="3.5" height="1.4" fill="#333" opacity="0.55"/><rect x="586.5" y="174.3" width="3.4" height="1.4" fill="#333" opacity="0.55"/><rect x="591.1" y="174.3" width="4.8" height="1.4" fill="#333" opacity="0.55"/><rect x="597.0" y="174.3" width="3.0" height="1.4" fill="#333" opacity="0.55"/><rect x="601.3" y="174.3" width="2.1" height="1.4" fill="#333" opacity="0.55"/><rect x="604.6" y="174.3" width="2.9" height="1.4" fill="#333" opacity="0.55"/><rect x="608.8" y="174.3" width="1.7" height="1.4" fill="#333" opacity="0.55"/><rect x="611.9" y="174.3" width="2.7" height="1.4" fill="#333" opacity="0.55"/><rect x="615.5" y="174.3" width="2.4" height="1.4" fill="#333" opacity="0.55"/><rect x="579.0" y="177.3" width="1.3" height="1.4" fill="#333" opacity="0.55"/><rect x="581.3" y="177.3" width="3.0" height="1.4" fill="#333" opacity="0.55"/><rect x="585.5" y="177.3" width="2.7" height="1.4" fill="#333" opacity="0.55"/><rect x="589.2" y="177.3" width="2.2" height="1.4" fill="#333" opacity="0.55"/><rect x="592.6" y="177.3" width="5.2" height="1.4" fill="#333" opacity="0.55"/><rect x="599.0" y="177.3" width="2.1" height="1.4" fill="#333" opacity="0.55"/><rect x="602.4" y="177.3" width="2.9" height="1.4" fill="#333" opacity="0.55"/><rect x="606.2" y="177.3" width="1.8" height="1.4" fill="#333" opacity="0.55"/><rect x="609.2" y="177.3" width="4.7" height="1.4" fill="#333" opacity="0.55"/><rect x="615.1" y="177.3" width="3.2" height="1.4" fill="#333" opacity="0.55"/><rect x="579.0" y="180.3" width="2.2" height="1.4" fill="#333" opacity="0.55"/><rect x="582.6" y="180.3" width="2.7" height="1.4" fill="#333" opacity="0.55"/><rect x="586.5" y="180.3" width="4.7" height="1.4" fill="#333" opacity="0.55"/><rect x="592.5" y="180.3" width="3.2" height="1.4" fill="#333" opacity="0.55"/><rect x="596.7" y="180.3" width="3.6" height="1.4" fill="#333" opacity="0.55"/><rect x="601.1" y="180.3" width="4.8" height="1.4" fill="#333" opacity="0.55"/><rect x="606.9" y="180.3" width="4.9" height="1.4" fill="#333" opacity="0.55"/><rect x="612.7" y="180.3" width="2.8" height="1.4" fill="#333" opacity="0.55"/><rect x="616.5" y="180.3" width="3.0" height="1.4" fill="#333" opacity="0.55"/><rect x="579.0" y="183.3" width="1.2" height="1.4" fill="#333" opacity="0.55"/><rect x="581.4" y="183.3" width="2.4" height="1.4" fill="#333" opacity="0.55"/><rect x="584.8" y="183.3" width="2.5" height="1.4" fill="#333" opacity="0.55"/><rect x="588.4" y="183.3" width="3.0" height="1.4" fill="#333" opacity="0.55"/><rect x="592.6" y="183.3" width="4.0" height="1.4" fill="#333" opacity="0.55"/><rect x="597.7" y="183.3" width="5.2" height="1.4" fill="#333" opacity="0.55"/><rect x="604.2" y="183.3" width="1.4" height="1.4" fill="#333" opacity="0.55"/><rect x="579.0" y="188.0" width="5.1" height="1.4" fill="#111" opacity="0.8"/><rect x="585.4" y="188.0" width="1.8" height="1.4" fill="#111" opacity="0.8"/><rect x="588.5" y="188.0" width="3.9" height="1.4" fill="#111" opacity="0.8"/><rect x="593.2" y="188.0" width="1.2" height="1.4" fill="#111" opacity="0.8"/><rect x="595.8" y="188.0" width="4.0" height="1.4" fill="#111" opacity="0.8"/><rect x="600.8" y="188.0" width="1.6" height="1.4" fill="#111" opacity="0.8"/><rect x="603.3" y="188.0" width="2.2" height="1.4" fill="#111" opacity="0.8"/><rect x="606.8" y="188.0" width="2.7" height="1.4" fill="#111" opacity="0.8"/><rect x="610.4" y="188.0" width="5.1" height="1.4" fill="#111" opacity="0.8"/><rect x="616.7" y="188.0" width="1.9" height="1.4" fill="#111" opacity="0.8"/><rect x="579.0" y="191.0" width="3.8" height="1.4" fill="#333" opacity="0.55"/><rect x="584.1" y="191.0" width="4.1" height="1.4" fill="#333" opacity="0.55"/><rect x="589.5" y="191.0" width="4.6" height="1.4" fill="#333" opacity="0.55"/><rect x="595.4" y="191.0" width="2.0" height="1.4" fill="#333" opacity="0.55"/><rect x="598.7" y="191.0" width="3.5" height="1.4" fill="#333" opacity="0.55"/><rect x="603.4" y="191.0" width="3.1" height="1.4" fill="#333" opacity="0.55"/><rect x="607.8" y="191.0" width="3.6" height="1.4" fill="#333" opacity="0.55"/><rect x="612.3" y="191.0" width="2.2" height="1.4" fill="#333" opacity="0.55"/><rect x="615.4" y="191.0" width="3.3" height="1.4" fill="#333" opacity="0.55"/><rect x="579.0" y="194.0" width="3.2" height="1.4" fill="#333" opacity="0.55"/><rect x="583.1" y="194.0" width="3.3" height="1.4" fill="#333" opacity="0.55"/><rect x="587.5" y="194.0" width="3.5" height="1.4" fill="#333" opacity="0.55"/><rect x="592.3" y="194.0" width="1.2" height="1.4" fill="#333" opacity="0.55"/><rect x="594.9" y="194.0" width="3.2" height="1.4" fill="#333" opacity="0.55"/><rect x="599.2" y="194.0" width="4.1" height="1.4" fill="#333" opacity="0.55"/><rect x="604.6" y="194.0" width="2.8" height="1.4" fill="#333" opacity="0.55"/><rect x="608.5" y="194.0" width="5.3" height="1.4" fill="#333" opacity="0.55"/><rect x="614.6" y="194.0" width="3.9" height="1.4" fill="#333" opacity="0.55"/><rect x="579.0" y="196.9" width="1.3" height="1.4" fill="#333" opacity="0.55"/><rect x="581.5" y="196.9" width="4.1" height="1.4" fill="#333" opacity="0.55"/><rect x="587.0" y="196.9" width="2.6" height="1.4" fill="#333" opacity="0.55"/><rect x="591.0" y="196.9" width="3.4" height="1.4" fill="#333" opacity="0.55"/><rect x="595.5" y="196.9" width="5.1" height="1.4" fill="#333" opacity="0.55"/><rect x="601.4" y="196.9" width="4.3" height="1.4" fill="#333" opacity="0.55"/><rect x="606.8" y="196.9" width="2.7" height="1.4" fill="#333" opacity="0.55"/><rect x="610.8" y="196.9" width="2.8" height="1.4" fill="#333" opacity="0.55"/><rect x="614.7" y="196.9" width="3.5" height="1.4" fill="#333" opacity="0.55"/><rect x="579.0" y="199.9" width="2.1" height="1.4" fill="#333" opacity="0.55"/><rect x="582.2" y="199.9" width="3.0" height="1.4" fill="#333" opacity="0.55"/><rect x="586.3" y="199.9" width="4.8" height="1.4" fill="#333" opacity="0.55"/><rect x="592.0" y="199.9" width="4.8" height="1.4" fill="#333" opacity="0.55"/><rect x="579.0" y="204.0" width="3.4" height="1.4" fill="#111" opacity="0.8"/><rect x="583.3" y="204.0" width="3.4" height="1.4" fill="#111" opacity="0.8"/><rect x="588.1" y="204.0" width="4.0" height="1.4" fill="#111" opacity="0.8"/><rect x="593.4" y="204.0" width="2.6" height="1.4" fill="#111" opacity="0.8"/><rect x="597.0" y="204.0" width="2.5" height="1.4" fill="#111" opacity="0.8"/><rect x="600.6" y="204.0" width="3.9" height="1.4" fill="#111" opacity="0.8"/><rect x="605.8" y="204.0" width="1.4" height="1.4" fill="#111" opacity="0.8"/><rect x="608.4" y="204.0" width="5.0" height="1.4" fill="#111" opacity="0.8"/><rect x="614.6" y="204.0" width="1.4" height="1.4" fill="#111" opacity="0.8"/><rect x="617.0" y="204.0" width="1.2" height="1.4" fill="#111" opacity="0.8"/><rect x="579.0" y="207.0" width="5.2" height="1.4" fill="#333" opacity="0.55"/><rect x="585.3" y="207.0" width="4.0" height="1.4" fill="#333" opacity="0.55"/><rect x="590.6" y="207.0" width="5.1" height="1.4" fill="#333" opacity="0.55"/><rect x="596.9" y="207.0" width="3.9" height="1.4" fill="#333" opacity="0.55"/><rect x="601.9" y="207.0" width="4.2" height="1.4" fill="#333" opacity="0.55"/><rect x="607.3" y="207.0" width="4.1" height="1.4" fill="#333" opacity="0.55"/><rect x="612.3" y="207.0" width="4.1" height="1.4" fill="#333" opacity="0.55"/><rect x="617.5" y="207.0" width="2.0" height="1.4" fill="#333" opacity="0.55"/><rect x="579.0" y="210.0" width="2.0" height="1.4" fill="#333" opacity="0.55"/><rect x="581.8" y="210.0" width="4.5" height="1.4" fill="#333" opacity="0.55"/><rect x="587.7" y="210.0" width="4.0" height="1.4" fill="#333" opacity="0.55"/><rect x="592.7" y="210.0" width="4.7" height="1.4" fill="#333" opacity="0.55"/><rect x="598.7" y="210.0" width="3.6" height="1.4" fill="#333" opacity="0.55"/><rect x="603.3" y="210.0" width="2.5" height="1.4" fill="#333" opacity="0.55"/><rect x="606.9" y="210.0" width="2.6" height="1.4" fill="#333" opacity="0.55"/><rect x="610.5" y="210.0" width="4.0" height="1.4" fill="#333" opacity="0.55"/><rect x="615.8" y="210.0" width="1.4" height="1.4" fill="#333" opacity="0.55"/><rect x="618.4" y="210.0" width="1.1" height="1.4" fill="#333" opacity="0.55"/><rect x="579.0" y="212.9" width="4.7" height="1.4" fill="#333" opacity="0.55"/><rect x="584.8" y="212.9" width="5.2" height="1.4" fill="#333" opacity="0.55"/><rect x="591.0" y="212.9" width="1.3" height="1.4" fill="#333" opacity="0.55"/><rect x="593.3" y="212.9" width="3.7" height="1.4" fill="#333" opacity="0.55"/><rect x="598.4" y="212.9" width="4.9" height="1.4" fill="#333" opacity="0.55"/><rect x="622.0" y="158.0" width="3.0" height="1.4" fill="#333" opacity="0.55"/><rect x="625.8" y="158.0" width="4.0" height="1.4" fill="#333" opacity="0.55"/><rect x="630.7" y="158.0" width="1.9" height="1.4" fill="#333" opacity="0.55"/><rect x="633.4" y="158.0" width="1.2" height="1.4" fill="#333" opacity="0.55"/><rect x="635.8" y="158.0" width="1.7" height="1.4" fill="#333" opacity="0.55"/><rect x="638.9" y="158.0" width="1.6" height="1.4" fill="#333" opacity="0.55"/><rect x="641.8" y="158.0" width="1.8" height="1.4" fill="#333" opacity="0.55"/><rect x="644.4" y="158.0" width="4.3" height="1.4" fill="#333" opacity="0.55"/><rect x="649.6" y="158.0" width="4.4" height="1.4" fill="#333" opacity="0.55"/><rect x="654.9" y="158.0" width="1.4" height="1.4" fill="#333" opacity="0.55"/><rect x="657.6" y="158.0" width="4.3" height="1.4" fill="#333" opacity="0.55"/><rect x="622.0" y="161.0" width="4.3" height="1.4" fill="#333" opacity="0.55"/><rect x="627.2" y="161.0" width="3.9" height="1.4" fill="#333" opacity="0.55"/><rect x="632.3" y="161.0" width="3.2" height="1.4" fill="#333" opacity="0.55"/><rect x="636.9" y="161.0" width="2.3" height="1.4" fill="#333" opacity="0.55"/><rect x="640.5" y="161.0" width="4.3" height="1.4" fill="#333" opacity="0.55"/><rect x="645.6" y="161.0" width="1.3" height="1.4" fill="#333" opacity="0.55"/><rect x="648.1" y="161.0" width="4.7" height="1.4" fill="#333" opacity="0.55"/><rect x="653.6" y="161.0" width="2.5" height="1.4" fill="#333" opacity="0.55"/><rect x="657.4" y="161.0" width="1.9" height="1.4" fill="#333" opacity="0.55"/><rect x="660.6" y="161.0" width="2.4" height="1.4" fill="#333" opacity="0.55"/><rect x="622.0" y="164.0" width="2.8" height="1.4" fill="#333" opacity="0.55"/><rect x="625.9" y="164.0" width="3.1" height="1.4" fill="#333" opacity="0.55"/><rect x="630.2" y="164.0" width="1.8" height="1.4" fill="#333" opacity="0.55"/><rect x="633.3" y="164.0" width="2.8" height="1.4" fill="#333" opacity="0.55"/><rect x="637.3" y="164.0" width="3.9" height="1.4" fill="#333" opacity="0.55"/><rect x="642.2" y="164.0" width="2.9" height="1.4" fill="#333" opacity="0.55"/><rect x="646.4" y="164.0" width="5.3" height="1.4" fill="#333" opacity="0.55"/><rect x="652.9" y="164.0" width="3.6" height="1.4" fill="#333" opacity="0.55"/><rect x="657.5" y="164.0" width="1.5" height="1.4" fill="#333" opacity="0.55"/><rect x="660.3" y="164.0" width="2.7" height="1.4" fill="#333" opacity="0.55"/><rect x="622.0" y="166.9" width="2.6" height="1.4" fill="#333" opacity="0.55"/><rect x="625.8" y="166.9" width="5.4" height="1.4" fill="#333" opacity="0.55"/><rect x="632.5" y="166.9" width="3.8" height="1.4" fill="#333" opacity="0.55"/><rect x="637.3" y="166.9" width="3.0" height="1.4" fill="#333" opacity="0.55"/><rect x="641.6" y="166.9" width="2.8" height="1.4" fill="#333" opacity="0.55"/><rect x="645.7" y="166.9" width="3.8" height="1.4" fill="#333" opacity="0.55"/><rect x="650.8" y="166.9" width="4.7" height="1.4" fill="#333" opacity="0.55"/><rect x="656.4" y="166.9" width="1.2" height="1.4" fill="#333" opacity="0.55"/><rect x="658.6" y="166.9" width="3.0" height="1.4" fill="#333" opacity="0.55"/><rect x="622.0" y="169.9" width="4.7" height="1.4" fill="#333" opacity="0.55"/><rect x="628.0" y="169.9" width="1.4" height="1.4" fill="#333" opacity="0.55"/><rect x="630.7" y="169.9" width="4.7" height="1.4" fill="#333" opacity="0.55"/><rect x="622.0" y="174.2" width="3.7" height="1.4" fill="#111" opacity="0.8"/><rect x="626.6" y="174.2" width="4.9" height="1.4" fill="#111" opacity="0.8"/><rect x="632.8" y="174.2" width="4.1" height="1.4" fill="#111" opacity="0.8"/><rect x="638.3" y="174.2" width="2.7" height="1.4" fill="#111" opacity="0.8"/><rect x="641.8" y="174.2" width="3.6" height="1.4" fill="#111" opacity="0.8"/><rect x="646.7" y="174.2" width="2.1" height="1.4" fill="#111" opacity="0.8"/><rect x="650.0" y="174.2" width="5.2" height="1.4" fill="#111" opacity="0.8"/><rect x="656.1" y="174.2" width="3.8" height="1.4" fill="#111" opacity="0.8"/><rect x="661.1" y="174.2" width="1.9" height="1.4" fill="#111" opacity="0.8"/><rect x="622.0" y="177.2" width="2.3" height="1.4" fill="#333" opacity="0.55"/><rect x="625.5" y="177.2" width="4.6" height="1.4" fill="#333" opacity="0.55"/><rect x="631.2" y="177.2" width="1.6" height="1.4" fill="#333" opacity="0.55"/><rect x="634.1" y="177.2" width="4.5" height="1.4" fill="#333" opacity="0.55"/><rect x="639.5" y="177.2" width="3.7" height="1.4" fill="#333" opacity="0.55"/><rect x="644.6" y="177.2" width="5.0" height="1.4" fill="#333" opacity="0.55"/><rect x="650.7" y="177.2" width="3.2" height="1.4" fill="#333" opacity="0.55"/><rect x="655.1" y="177.2" width="2.0" height="1.4" fill="#333" opacity="0.55"/><rect x="658.0" y="177.2" width="2.0" height="1.4" fill="#333" opacity="0.55"/><rect x="661.2" y="177.2" width="1.8" height="1.4" fill="#333" opacity="0.55"/><rect x="622.0" y="180.2" width="2.9" height="1.4" fill="#333" opacity="0.55"/><rect x="626.0" y="180.2" width="1.8" height="1.4" fill="#333" opacity="0.55"/><rect x="628.7" y="180.2" width="5.5" height="1.4" fill="#333" opacity="0.55"/><rect x="635.2" y="180.2" width="1.7" height="1.4" fill="#333" opacity="0.55"/><rect x="638.1" y="180.2" width="4.6" height="1.4" fill="#333" opacity="0.55"/><rect x="643.5" y="180.2" width="3.8" height="1.4" fill="#333" opacity="0.55"/><rect x="648.3" y="180.2" width="3.4" height="1.4" fill="#333" opacity="0.55"/><rect x="652.6" y="180.2" width="1.3" height="1.4" fill="#333" opacity="0.55"/><rect x="655.3" y="180.2" width="4.9" height="1.4" fill="#333" opacity="0.55"/><rect x="661.3" y="180.2" width="1.7" height="1.4" fill="#333" opacity="0.55"/><rect x="622.0" y="183.1" width="4.6" height="1.4" fill="#333" opacity="0.55"/><rect x="627.6" y="183.1" width="5.3" height="1.4" fill="#333" opacity="0.55"/><rect x="634.1" y="183.1" width="4.7" height="1.4" fill="#333" opacity="0.55"/><rect x="640.2" y="183.1" width="2.3" height="1.4" fill="#333" opacity="0.55"/><rect x="643.4" y="183.1" width="2.1" height="1.4" fill="#333" opacity="0.55"/><rect x="646.3" y="183.1" width="1.6" height="1.4" fill="#333" opacity="0.55"/><rect x="648.7" y="183.1" width="3.6" height="1.4" fill="#333" opacity="0.55"/><rect x="653.6" y="183.1" width="3.2" height="1.4" fill="#333" opacity="0.55"/><rect x="658.2" y="183.1" width="4.8" height="1.4" fill="#333" opacity="0.55"/><rect x="622.0" y="188.0" width="3.8" height="1.4" fill="#333" opacity="0.95"/><rect x="626.8" y="188.0" width="1.7" height="1.4" fill="#333" opacity="0.95"/><rect x="629.9" y="188.0" width="2.3" height="1.4" fill="#333" opacity="0.95"/><rect x="633.3" y="188.0" width="4.0" height="1.4" fill="#333" opacity="0.95"/><rect x="638.7" y="188.0" width="4.1" height="1.4" fill="#333" opacity="0.95"/><rect x="643.8" y="188.0" width="3.1" height="1.4" fill="#333" opacity="0.95"/><rect x="647.8" y="188.0" width="5.4" height="1.4" fill="#333" opacity="0.95"/><rect x="654.6" y="188.0" width="2.2" height="1.4" fill="#333" opacity="0.95"/><rect x="657.5" y="188.0" width="2.3" height="1.4" fill="#333" opacity="0.95"/><rect x="660.8" y="188.0" width="2.2" height="1.4" fill="#333" opacity="0.95"/><rect x="622.0" y="191.0" width="4.8" height="1.4" fill="#333" opacity="0.95"/><rect x="627.6" y="191.0" width="4.6" height="1.4" fill="#333" opacity="0.95"/><rect x="633.4" y="191.0" width="4.0" height="1.4" fill="#333" opacity="0.95"/><rect x="638.8" y="191.0" width="1.4" height="1.4" fill="#333" opacity="0.95"/><rect x="641.1" y="191.0" width="4.4" height="1.4" fill="#333" opacity="0.95"/><rect x="646.9" y="191.0" width="4.1" height="1.4" fill="#333" opacity="0.95"/><rect x="652.0" y="191.0" width="3.7" height="1.4" fill="#333" opacity="0.95"/><rect x="657.0" y="191.0" width="1.7" height="1.4" fill="#333" opacity="0.95"/><rect x="659.7" y="191.0" width="2.3" height="1.4" fill="#333" opacity="0.95"/><rect x="622.0" y="194.0" width="3.3" height="1.4" fill="#333" opacity="0.95"/><rect x="626.2" y="194.0" width="2.2" height="1.4" fill="#333" opacity="0.95"/><rect x="629.3" y="194.0" width="4.1" height="1.4" fill="#333" opacity="0.95"/><rect x="634.2" y="194.0" width="4.3" height="1.4" fill="#333" opacity="0.95"/><rect x="639.4" y="194.0" width="1.4" height="1.4" fill="#333" opacity="0.95"/><rect x="642.1" y="194.0" width="2.1" height="1.4" fill="#333" opacity="0.95"/><rect x="645.6" y="194.0" width="4.9" height="1.4" fill="#333" opacity="0.95"/><rect x="651.9" y="194.0" width="1.8" height="1.4" fill="#333" opacity="0.95"/><rect x="654.8" y="194.0" width="1.6" height="1.4" fill="#333" opacity="0.95"/><rect x="657.7" y="194.0" width="4.8" height="1.4" fill="#333" opacity="0.95"/><rect x="622.0" y="196.9" width="3.1" height="1.4" fill="#333" opacity="0.95"/><rect x="626.1" y="196.9" width="4.7" height="1.4" fill="#333" opacity="0.95"/><rect x="632.0" y="196.9" width="3.9" height="1.4" fill="#333" opacity="0.95"/><rect x="636.8" y="196.9" width="2.2" height="1.4" fill="#333" opacity="0.95"/><rect x="639.7" y="196.9" width="4.3" height="1.4" fill="#333" opacity="0.95"/><rect x="645.1" y="196.9" width="1.8" height="1.4" fill="#333" opacity="0.95"/><rect x="648.3" y="196.9" width="2.3" height="1.4" fill="#333" opacity="0.95"/><rect x="651.7" y="196.9" width="1.9" height="1.4" fill="#333" opacity="0.95"/><rect x="654.5" y="196.9" width="4.8" height="1.4" fill="#333" opacity="0.95"/><rect x="660.3" y="196.9" width="1.9" height="1.4" fill="#333" opacity="0.95"/><rect x="622.0" y="199.9" width="2.6" height="1.4" fill="#333" opacity="0.95"/><rect x="625.9" y="199.9" width="1.7" height="1.4" fill="#333" opacity="0.95"/><rect x="629.0" y="199.9" width="1.4" height="1.4" fill="#333" opacity="0.95"/><rect x="631.8" y="199.9" width="4.1" height="1.4" fill="#333" opacity="0.95"/><rect x="636.8" y="199.9" width="3.3" height="1.4" fill="#333" opacity="0.95"/><rect x="641.0" y="199.9" width="2.3" height="1.4" fill="#333" opacity="0.95"/><rect x="644.2" y="199.9" width="2.8" height="1.4" fill="#333" opacity="0.95"/><rect x="648.4" y="199.9" width="5.5" height="1.4" fill="#333" opacity="0.95"/><rect x="655.2" y="199.9" width="1.6" height="1.4" fill="#333" opacity="0.95"/><rect x="657.8" y="199.9" width="5.1" height="1.4" fill="#333" opacity="0.95"/><rect x="622.0" y="202.9" width="4.3" height="1.4" fill="#333" opacity="0.95"/><rect x="627.3" y="202.9" width="5.4" height="1.4" fill="#333" opacity="0.95"/><rect x="633.5" y="202.9" width="4.7" height="1.4" fill="#333" opacity="0.95"/><rect x="639.2" y="202.9" width="1.8" height="1.4" fill="#333" opacity="0.95"/><rect x="641.8" y="202.9" width="4.8" height="1.4" fill="#333" opacity="0.95"/><rect x="647.7" y="202.9" width="2.0" height="1.4" fill="#333" opacity="0.95"/><rect x="650.8" y="202.9" width="5.1" height="1.4" fill="#333" opacity="0.95"/><rect x="656.8" y="202.9" width="3.7" height="1.4" fill="#333" opacity="0.95"/><rect x="661.3" y="202.9" width="1.7" height="1.4" fill="#333" opacity="0.95"/><rect x="622.0" y="205.9" width="4.3" height="1.4" fill="#333" opacity="0.95"/><rect x="627.2" y="205.9" width="1.5" height="1.4" fill="#333" opacity="0.95"/><rect x="629.6" y="205.9" width="3.8" height="1.4" fill="#333" opacity="0.95"/><rect x="634.5" y="205.9" width="2.4" height="1.4" fill="#333" opacity="0.95"/><rect x="637.8" y="205.9" width="3.8" height="1.4" fill="#333" opacity="0.95"/><rect x="642.8" y="205.9" width="3.8" height="1.4" fill="#333" opacity="0.95"/><rect x="659" y="212.5" width="3" height="3" fill="#111"/><defs><linearGradient id="sky" x1="0" y1="0" x2="0" y2="1"><stop offset="0" stop-color="#5c9ae0"/><stop offset="0.7" stop-color="#c6d8ee"/><stop offset="1" stop-color="#e6ecf2"/></linearGradient>
<linearGradient id="wat" x1="0" y1="0" x2="0" y2="1"><stop offset="0" stop-color="#9a7a40"/><stop offset="1" stop-color="#4a3820"/></linearGradient><clipPath id="amc"><rect x="579" y="219.7" width="84" height="57.1"/></clipPath></defs><g clip-path="url(#amc)">
<rect x="579" y="219.7" width="84" height="40" fill="url(#sky)"/>
<path d="M630 226Q636 222 642 224Q648 220 655 223Q661 222 663 225V229H628Z" fill="#eef1f5" opacity="0.85"/>
<path d="M612 228Q618 225 624 227Q628 226 630 229H612Z" fill="#eef1f5" opacity="0.7"/>
<rect x="579" y="257.5" width="84" height="19.3" fill="url(#wat)"/>
<path d="M583 244L587.0 241L591 244V258H583Z" fill="#5a4a3c"/>
<rect x="584.0" y="246.0" width="2.5" height="1.6" fill="#f1ece2" opacity="0.55"/>
<rect x="587.2" y="246.0" width="2.5" height="1.6" fill="#f1ece2" opacity="0.55"/>
<rect x="584.0" y="249.3" width="2.5" height="1.6" fill="#f1ece2" opacity="0.55"/>
<rect x="587.2" y="249.3" width="2.5" height="1.6" fill="#f1ece2" opacity="0.55"/>
<rect x="584.0" y="252.6" width="2.5" height="1.6" fill="#f1ece2" opacity="0.55"/>
<rect x="587.2" y="252.6" width="2.5" height="1.6" fill="#f1ece2" opacity="0.55"/>
<path d="M590 239L593.0 236L596 239V258H590Z" fill="#cfc8be"/>
<rect x="591.0" y="241.0" width="1.4" height="1.6" fill="#f1ece2" opacity="0.55"/>
<rect x="593.2" y="241.0" width="1.4" height="1.6" fill="#f1ece2" opacity="0.55"/>
<rect x="591.0" y="244.3" width="1.4" height="1.6" fill="#f1ece2" opacity="0.55"/>
<rect x="593.2" y="244.3" width="1.4" height="1.6" fill="#f1ece2" opacity="0.55"/>
<rect x="591.0" y="247.6" width="1.4" height="1.6" fill="#f1ece2" opacity="0.55"/>
<rect x="593.2" y="247.6" width="1.4" height="1.6" fill="#f1ece2" opacity="0.55"/>
<rect x="591.0" y="250.9" width="1.4" height="1.6" fill="#f1ece2" opacity="0.55"/>
<rect x="593.2" y="250.9" width="1.4" height="1.6" fill="#f1ece2" opacity="0.55"/>
<rect x="591.0" y="254.2" width="1.4" height="1.6" fill="#f1ece2" opacity="0.55"/>
<rect x="593.2" y="254.2" width="1.4" height="1.6" fill="#f1ece2" opacity="0.55"/>
<path d="M596 237L600.0 234L604 237V258H596Z" fill="#7c5444"/>
<rect x="597.0" y="239.0" width="2.5" height="1.6" fill="#f1ece2" opacity="0.55"/>
<rect x="600.2" y="239.0" width="2.5" height="1.6" fill="#f1ece2" opacity="0.55"/>
<rect x="597.0" y="242.3" width="2.5" height="1.6" fill="#f1ece2" opacity="0.55"/>
<rect x="600.2" y="242.3" width="2.5" height="1.6" fill="#f1ece2" opacity="0.55"/>
<rect x="597.0" y="245.6" width="2.5" height="1.6" fill="#f1ece2" opacity="0.55"/>
<rect x="600.2" y="245.6" width="2.5" height="1.6" fill="#f1ece2" opacity="0.55"/>
<rect x="597.0" y="248.9" width="2.5" height="1.6" fill="#f1ece2" opacity="0.55"/>
<rect x="600.2" y="248.9" width="2.5" height="1.6" fill="#f1ece2" opacity="0.55"/>
<rect x="597.0" y="252.2" width="2.5" height="1.6" fill="#f1ece2" opacity="0.55"/>
<rect x="600.2" y="252.2" width="2.5" height="1.6" fill="#f1ece2" opacity="0.55"/>
<path d="M604 233L609.0 230L614 233V258H604Z" fill="#c9552e"/>
<rect x="605.0" y="235.0" width="2.0" height="1.6" fill="#f1ece2" opacity="0.55"/>
<rect x="607.8" y="235.0" width="2.0" height="1.6" fill="#f1ece2" opacity="0.55"/>
<rect x="610.7" y="235.0" width="2.0" height="1.6" fill="#f1ece2" opacity="0.55"/>
<rect x="605.0" y="238.3" width="2.0" height="1.6" fill="#f1ece2" opacity="0.55"/>
<rect x="607.8" y="238.3" width="2.0" height="1.6" fill="#f1ece2" opacity="0.55"/>
<rect x="610.7" y="238.3" width="2.0" height="1.6" fill="#f1ece2" opacity="0.55"/>
<rect x="605.0" y="241.6" width="2.0" height="1.6" fill="#f1ece2" opacity="0.55"/>
<rect x="607.8" y="241.6" width="2.0" height="1.6" fill="#f1ece2" opacity="0.55"/>
<rect x="610.7" y="241.6" width="2.0" height="1.6" fill="#f1ece2" opacity="0.55"/>
<rect x="605.0" y="244.9" width="2.0" height="1.6" fill="#f1ece2" opacity="0.55"/>
<rect x="607.8" y="244.9" width="2.0" height="1.6" fill="#f1ece2" opacity="0.55"/>
<rect x="610.7" y="244.9" width="2.0" height="1.6" fill="#f1ece2" opacity="0.55"/>
<rect x="605.0" y="248.2" width="2.0" height="1.6" fill="#f1ece2" opacity="0.55"/>
<rect x="607.8" y="248.2" width="2.0" height="1.6" fill="#f1ece2" opacity="0.55"/>
<rect x="610.7" y="248.2" width="2.0" height="1.6" fill="#f1ece2" opacity="0.55"/>
<rect x="605.0" y="251.5" width="2.0" height="1.6" fill="#f1ece2" opacity="0.55"/>
<rect x="607.8" y="251.5" width="2.0" height="1.6" fill="#f1ece2" opacity="0.55"/>
<rect x="610.7" y="251.5" width="2.0" height="1.6" fill="#f1ece2" opacity="0.55"/>
<rect x="605.0" y="254.8" width="2.0" height="1.6" fill="#f1ece2" opacity="0.55"/>
<rect x="607.8" y="254.8" width="2.0" height="1.6" fill="#f1ece2" opacity="0.55"/>
<rect x="610.7" y="254.8" width="2.0" height="1.6" fill="#f1ece2" opacity="0.55"/>
<path d="M614 234L619.0 231L624 234V258H614Z" fill="#ae9680"/>
<rect x="615.0" y="236.0" width="2.0" height="1.6" fill="#f1ece2" opacity="0.55"/>
<rect x="617.8" y="236.0" width="2.0" height="1.6" fill="#f1ece2" opacity="0.55"/>
<rect x="620.7" y="236.0" width="2.0" height="1.6" fill="#f1ece2" opacity="0.55"/>
<rect x="615.0" y="239.3" width="2.0" height="1.6" fill="#f1ece2" opacity="0.55"/>
<rect x="617.8" y="239.3" width="2.0" height="1.6" fill="#f1ece2" opacity="0.55"/>
<rect x="620.7" y="239.3" width="2.0" height="1.6" fill="#f1ece2" opacity="0.55"/>
<rect x="615.0" y="242.6" width="2.0" height="1.6" fill="#f1ece2" opacity="0.55"/>
<rect x="617.8" y="242.6" width="2.0" height="1.6" fill="#f1ece2" opacity="0.55"/>
<rect x="620.7" y="242.6" width="2.0" height="1.6" fill="#f1ece2" opacity="0.55"/>
<rect x="615.0" y="245.9" width="2.0" height="1.6" fill="#f1ece2" opacity="0.55"/>
<rect x="617.8" y="245.9" width="2.0" height="1.6" fill="#f1ece2" opacity="0.55"/>
<rect x="620.7" y="245.9" width="2.0" height="1.6" fill="#f1ece2" opacity="0.55"/>
<rect x="615.0" y="249.2" width="2.0" height="1.6" fill="#f1ece2" opacity="0.55"/>
<rect x="617.8" y="249.2" width="2.0" height="1.6" fill="#f1ece2" opacity="0.55"/>
<rect x="620.7" y="249.2" width="2.0" height="1.6" fill="#f1ece2" opacity="0.55"/>
<rect x="615.0" y="252.5" width="2.0" height="1.6" fill="#f1ece2" opacity="0.55"/>
<rect x="617.8" y="252.5" width="2.0" height="1.6" fill="#f1ece2" opacity="0.55"/>
<rect x="620.7" y="252.5" width="2.0" height="1.6" fill="#f1ece2" opacity="0.55"/>
<path d="M624 231L628.0 228L632 231V258H624Z" fill="#6c5444"/>
<rect x="625.0" y="233.0" width="2.5" height="1.6" fill="#f1ece2" opacity="0.55"/>
<rect x="628.2" y="233.0" width="2.5" height="1.6" fill="#f1ece2" opacity="0.55"/>
<rect x="625.0" y="236.3" width="2.5" height="1.6" fill="#f1ece2" opacity="0.55"/>
<rect x="628.2" y="236.3" width="2.5" height="1.6" fill="#f1ece2" opacity="0.55"/>
<rect x="625.0" y="239.6" width="2.5" height="1.6" fill="#f1ece2" opacity="0.55"/>
<rect x="628.2" y="239.6" width="2.5" height="1.6" fill="#f1ece2" opacity="0.55"/>
<rect x="625.0" y="242.9" width="2.5" height="1.6" fill="#f1ece2" opacity="0.55"/>
<rect x="628.2" y="242.9" width="2.5" height="1.6" fill="#f1ece2" opacity="0.55"/>
<rect x="625.0" y="246.2" width="2.5" height="1.6" fill="#f1ece2" opacity="0.55"/>
<rect x="628.2" y="246.2" width="2.5" height="1.6" fill="#f1ece2" opacity="0.55"/>
<rect x="625.0" y="249.5" width="2.5" height="1.6" fill="#f1ece2" opacity="0.55"/>
<rect x="628.2" y="249.5" width="2.5" height="1.6" fill="#f1ece2" opacity="0.55"/>
<rect x="625.0" y="252.8" width="2.5" height="1.6" fill="#f1ece2" opacity="0.55"/>
<rect x="628.2" y="252.8" width="2.5" height="1.6" fill="#f1ece2" opacity="0.55"/>
<path d="M632 233L636.0 230L640 233V258H632Z" fill="#a84c2e"/>
<rect x="633.0" y="235.0" width="2.5" height="1.6" fill="#f1ece2" opacity="0.55"/>
<rect x="636.2" y="235.0" width="2.5" height="1.6" fill="#f1ece2" opacity="0.55"/>
<rect x="633.0" y="238.3" width="2.5" height="1.6" fill="#f1ece2" opacity="0.55"/>
<rect x="636.2" y="238.3" width="2.5" height="1.6" fill="#f1ece2" opacity="0.55"/>
<rect x="633.0" y="241.6" width="2.5" height="1.6" fill="#f1ece2" opacity="0.55"/>
<rect x="636.2" y="241.6" width="2.5" height="1.6" fill="#f1ece2" opacity="0.55"/>
<rect x="633.0" y="244.9" width="2.5" height="1.6" fill="#f1ece2" opacity="0.55"/>
<rect x="636.2" y="244.9" width="2.5" height="1.6" fill="#f1ece2" opacity="0.55"/>
<rect x="633.0" y="248.2" width="2.5" height="1.6" fill="#f1ece2" opacity="0.55"/>
<rect x="636.2" y="248.2" width="2.5" height="1.6" fill="#f1ece2" opacity="0.55"/>
<rect x="633.0" y="251.5" width="2.5" height="1.6" fill="#f1ece2" opacity="0.55"/>
<rect x="636.2" y="251.5" width="2.5" height="1.6" fill="#f1ece2" opacity="0.55"/>
<rect x="633.0" y="254.8" width="2.5" height="1.6" fill="#f1ece2" opacity="0.55"/>
<rect x="636.2" y="254.8" width="2.5" height="1.6" fill="#f1ece2" opacity="0.55"/>
<path d="M640 230L646.0 227L652 230V258H640Z" fill="#c8925e"/>
<rect x="641.0" y="232.0" width="2.7" height="1.6" fill="#f1ece2" opacity="0.55"/>
<rect x="644.5" y="232.0" width="2.7" height="1.6" fill="#f1ece2" opacity="0.55"/>
<rect x="648.0" y="232.0" width="2.7" height="1.6" fill="#f1ece2" opacity="0.55"/>
<rect x="641.0" y="235.3" width="2.7" height="1.6" fill="#f1ece2" opacity="0.55"/>
<rect x="644.5" y="235.3" width="2.7" height="1.6" fill="#f1ece2" opacity="0.55"/>
<rect x="648.0" y="235.3" width="2.7" height="1.6" fill="#f1ece2" opacity="0.55"/>
<rect x="641.0" y="238.6" width="2.7" height="1.6" fill="#f1ece2" opacity="0.55"/>
<rect x="644.5" y="238.6" width="2.7" height="1.6" fill="#f1ece2" opacity="0.55"/>
<rect x="648.0" y="238.6" width="2.7" height="1.6" fill="#f1ece2" opacity="0.55"/>
<rect x="641.0" y="241.9" width="2.7" height="1.6" fill="#f1ece2" opacity="0.55"/>
<rect x="644.5" y="241.9" width="2.7" height="1.6" fill="#f1ece2" opacity="0.55"/>
<rect x="648.0" y="241.9" width="2.7" height="1.6" fill="#f1ece2" opacity="0.55"/>
<rect x="641.0" y="245.2" width="2.7" height="1.6" fill="#f1ece2" opacity="0.55"/>
<rect x="644.5" y="245.2" width="2.7" height="1.6" fill="#f1ece2" opacity="0.55"/>
<rect x="648.0" y="245.2" width="2.7" height="1.6" fill="#f1ece2" opacity="0.55"/>
<rect x="641.0" y="248.5" width="2.7" height="1.6" fill="#f1ece2" opacity="0.55"/>
<rect x="644.5" y="248.5" width="2.7" height="1.6" fill="#f1ece2" opacity="0.55"/>
<rect x="648.0" y="248.5" width="2.7" height="1.6" fill="#f1ece2" opacity="0.55"/>
<rect x="641.0" y="251.8" width="2.7" height="1.6" fill="#f1ece2" opacity="0.55"/>
<rect x="644.5" y="251.8" width="2.7" height="1.6" fill="#f1ece2" opacity="0.55"/>
<rect x="648.0" y="251.8" width="2.7" height="1.6" fill="#f1ece2" opacity="0.55"/>
<path d="M652 235L657.5 232L663 235V258H652Z" fill="#c77a50"/>
<rect x="653.0" y="237.0" width="2.4" height="1.6" fill="#f1ece2" opacity="0.55"/>
<rect x="656.2" y="237.0" width="2.4" height="1.6" fill="#f1ece2" opacity="0.55"/>
<rect x="659.3" y="237.0" width="2.4" height="1.6" fill="#f1ece2" opacity="0.55"/>
<rect x="653.0" y="240.3" width="2.4" height="1.6" fill="#f1ece2" opacity="0.55"/>
<rect x="656.2" y="240.3" width="2.4" height="1.6" fill="#f1ece2" opacity="0.55"/>
<rect x="659.3" y="240.3" width="2.4" height="1.6" fill="#f1ece2" opacity="0.55"/>
<rect x="653.0" y="243.6" width="2.4" height="1.6" fill="#f1ece2" opacity="0.55"/>
<rect x="656.2" y="243.6" width="2.4" height="1.6" fill="#f1ece2" opacity="0.55"/>
<rect x="659.3" y="243.6" width="2.4" height="1.6" fill="#f1ece2" opacity="0.55"/>
<rect x="653.0" y="246.9" width="2.4" height="1.6" fill="#f1ece2" opacity="0.55"/>
<rect x="656.2" y="246.9" width="2.4" height="1.6" fill="#f1ece2" opacity="0.55"/>
<rect x="659.3" y="246.9" width="2.4" height="1.6" fill="#f1ece2" opacity="0.55"/>
<rect x="653.0" y="250.2" width="2.4" height="1.6" fill="#f1ece2" opacity="0.55"/>
<rect x="656.2" y="250.2" width="2.4" height="1.6" fill="#f1ece2" opacity="0.55"/>
<rect x="659.3" y="250.2" width="2.4" height="1.6" fill="#f1ece2" opacity="0.55"/>
<rect x="653.0" y="253.5" width="2.4" height="1.6" fill="#f1ece2" opacity="0.55"/>
<rect x="656.2" y="253.5" width="2.4" height="1.6" fill="#f1ece2" opacity="0.55"/>
<rect x="659.3" y="253.5" width="2.4" height="1.6" fill="#f1ece2" opacity="0.55"/>
<rect x="634.5" y="233" width="2.5" height="25" fill="#2e5a44"/>
<rect x="579" y="256.5" width="84" height="2" fill="#6e6048"/>
<rect x="579.0" y="258.5" width="1.6" height="18.3" fill="#b87040" opacity="0.75"/>
<rect x="581.1" y="258.5" width="3.3" height="18.3" fill="#d8b070" opacity="0.75"/>
<rect x="585.4" y="258.5" width="1.2" height="18.3" fill="#e0c080" opacity="0.75"/>
<rect x="587.9" y="258.5" width="2.2" height="18.3" fill="#b87040" opacity="0.75"/>
<rect x="590.7" y="258.5" width="3.5" height="18.3" fill="#d8b070" opacity="0.75"/>
<rect x="595.1" y="258.5" width="2.4" height="18.3" fill="#d8b070" opacity="0.75"/>
<rect x="598.6" y="258.5" width="1.4" height="18.3" fill="#f0dca0" opacity="0.75"/>
<rect x="600.4" y="258.5" width="3.3" height="18.3" fill="#d8b070" opacity="0.75"/>
<rect x="604.9" y="258.5" width="2.7" height="18.3" fill="#e0c080" opacity="0.75"/>
<rect x="608.1" y="258.5" width="3.4" height="18.3" fill="#e0c080" opacity="0.75"/>
<rect x="612.2" y="258.5" width="1.1" height="18.3" fill="#6a4a28" opacity="0.75"/>
<rect x="613.9" y="258.5" width="2.5" height="18.3" fill="#d8b070" opacity="0.75"/>
<rect x="617.5" y="258.5" width="3.3" height="18.3" fill="#d8b070" opacity="0.75"/>
<rect x="622.0" y="258.5" width="2.4" height="18.3" fill="#c8963e" opacity="0.75"/>
<rect x="625.8" y="258.5" width="1.2" height="18.3" fill="#c8963e" opacity="0.75"/>
<rect x="627.9" y="258.5" width="1.6" height="18.3" fill="#f0dca0" opacity="0.75"/>
<rect x="630.4" y="258.5" width="2.6" height="18.3" fill="#8a5a30" opacity="0.75"/>
<rect x="633.8" y="258.5" width="3.1" height="18.3" fill="#b87040" opacity="0.75"/>
<rect x="637.6" y="258.5" width="2.5" height="18.3" fill="#b87040" opacity="0.75"/>
<rect x="640.6" y="258.5" width="1.8" height="18.3" fill="#e0c080" opacity="0.75"/>
<rect x="643.8" y="258.5" width="3.5" height="18.3" fill="#f0dca0" opacity="0.75"/>
<rect x="648.4" y="258.5" width="2.7" height="18.3" fill="#8a5a30" opacity="0.75"/>
<rect x="652.6" y="258.5" width="3.3" height="18.3" fill="#b87040" opacity="0.75"/>
<rect x="656.3" y="258.5" width="2.6" height="18.3" fill="#f0dca0" opacity="0.75"/>
<rect x="660.2" y="258.5" width="2.4" height="18.3" fill="#8a5a30" opacity="0.75"/>
<rect x="579" y="271" width="84" height="5.8" fill="#3a2a1a" opacity="0.3"/>
<path d="M579 219.7H630Q626 223 620 222.5Q616 227 610 225Q606 230 601 229Q598 236 593 238Q590 246 587 250Q585 256 582 258H579Z" fill="#e8a41e"/>
<circle cx="602.6" cy="231.9" r="1.5" fill="#d08018"/>
<circle cx="618.2" cy="222.7" r="1.0" fill="#d08018"/>
<circle cx="599.9" cy="228.4" r="1.0" fill="#b86a12"/>
<circle cx="609.1" cy="220.3" r="1.8" fill="#d08018"/>
<circle cx="606.0" cy="234.9" r="1.2" fill="#f0b028"/>
<circle cx="627.9" cy="220.3" r="0.9" fill="#b86a12"/>
<circle cx="605.2" cy="235.9" r="2.2" fill="#d08018"/>
<circle cx="608.9" cy="221.9" r="0.9" fill="#d08018"/>
<circle cx="594.4" cy="243.9" r="2.1" fill="#fad860"/>
<circle cx="597.5" cy="239.6" r="1.3" fill="#b86a12"/>
<circle cx="612.4" cy="220.9" r="2.2" fill="#b86a12"/>
<circle cx="592.3" cy="236.7" r="1.8" fill="#d08018"/>
<circle cx="600.4" cy="225.0" r="1.2" fill="#d08018"/>
<circle cx="579.6" cy="234.8" r="1.6" fill="#f7c83a"/>
<circle cx="597.4" cy="233.2" r="1.0" fill="#f5bd35"/>
<circle cx="609.7" cy="226.1" r="1.8" fill="#d08018"/>
<circle cx="608.8" cy="223.7" r="1.5" fill="#b86a12"/>
<circle cx="582.0" cy="243.0" r="2.1" fill="#d08018"/>
<circle cx="609.8" cy="223.8" r="1.6" fill="#f0b028"/>
<circle cx="596.8" cy="227.0" r="1.3" fill="#b86a12"/>
<circle cx="591.9" cy="241.0" r="0.9" fill="#f7c83a"/>
<circle cx="626.6" cy="221.1" r="1.0" fill="#b86a12"/>
<circle cx="589.9" cy="242.7" r="1.1" fill="#f0b028"/>
<circle cx="612.2" cy="227.4" r="0.9" fill="#b86a12"/>
<circle cx="594.8" cy="228.0" r="2.0" fill="#fad860"/>
<circle cx="618.7" cy="226.4" r="0.9" fill="#f5bd35"/>
<circle cx="610.9" cy="231.1" r="1.4" fill="#f0b028"/>
<circle cx="617.6" cy="220.0" r="2.1" fill="#d08018"/>
<circle cx="618.5" cy="225.7" r="1.1" fill="#d08018"/>
<circle cx="595.7" cy="239.8" r="0.9" fill="#b86a12"/>
<circle cx="595.9" cy="222.8" r="1.2" fill="#d08018"/>
<circle cx="601.8" cy="232.2" r="1.2" fill="#b86a12"/>
<circle cx="599.1" cy="239.7" r="1.0" fill="#f7c83a"/>
<circle cx="602.4" cy="235.7" r="1.7" fill="#b86a12"/>
<circle cx="600.3" cy="239.5" r="2.1" fill="#f0b028"/>
<circle cx="580.6" cy="235.9" r="1.9" fill="#f5bd35"/>
<circle cx="604.4" cy="224.8" r="1.3" fill="#f0b028"/>
<circle cx="621.2" cy="224.1" r="2.2" fill="#f7c83a"/>
<circle cx="618.7" cy="220.0" r="2.1" fill="#f5bd35"/>
<circle cx="604.1" cy="223.3" r="2.0" fill="#fad860"/>
<path d="M655 259L663 262V272L654 269Z" fill="#6a7e98" opacity="0.8"/><rect x="579.0" y="280.0" width="2.1" height="1.4" fill="#777" opacity="0.75"/><rect x="581.9" y="280.0" width="4.4" height="1.4" fill="#777" opacity="0.75"/><rect x="587.3" y="280.0" width="4.3" height="1.4" fill="#777" opacity="0.75"/><rect x="592.4" y="280.0" width="4.7" height="1.4" fill="#777" opacity="0.75"/><rect x="598.1" y="280.0" width="4.8" height="1.4" fill="#777" opacity="0.75"/><rect x="604.3" y="280.0" width="3.3" height="1.4" fill="#777" opacity="0.75"/><rect x="608.4" y="280.0" width="5.1" height="1.4" fill="#777" opacity="0.75"/><rect x="614.6" y="280.0" width="4.9" height="1.4" fill="#777" opacity="0.75"/><rect x="620.5" y="280.0" width="2.0" height="1.4" fill="#777" opacity="0.75"/><rect x="623.8" y="280.0" width="2.8" height="1.4" fill="#777" opacity="0.75"/><rect x="627.5" y="280.0" width="2.8" height="1.4" fill="#777" opacity="0.75"/><rect x="631.4" y="280.0" width="1.2" height="1.4" fill="#777" opacity="0.75"/><rect x="633.8" y="280.0" width="3.1" height="1.4" fill="#777" opacity="0.75"/><rect x="638.0" y="280.0" width="1.7" height="1.4" fill="#777" opacity="0.75"/><rect x="640.9" y="280.0" width="4.7" height="1.4" fill="#777" opacity="0.75"/><rect x="647.0" y="280.0" width="2.6" height="1.4" fill="#777" opacity="0.75"/><rect x="650.8" y="280.0" width="2.8" height="1.4" fill="#777" opacity="0.75"/><rect x="654.9" y="280.0" width="1.5" height="1.4" fill="#777" opacity="0.75"/><rect x="657.7" y="280.0" width="5.3" height="1.4" fill="#777" opacity="0.75"/><rect x="579.0" y="283.0" width="3.4" height="1.4" fill="#777" opacity="0.75"/><rect x="583.5" y="283.0" width="3.5" height="1.4" fill="#777" opacity="0.75"/><rect x="587.8" y="283.0" width="5.4" height="1.4" fill="#777" opacity="0.75"/><rect x="594.1" y="283.0" width="2.0" height="1.4" fill="#777" opacity="0.75"/><rect x="597.0" y="283.0" width="2.3" height="1.4" fill="#777" opacity="0.75"/><rect x="600.6" y="283.0" width="1.3" height="1.4" fill="#777" opacity="0.75"/><rect x="602.7" y="283.0" width="4.2" height="1.4" fill="#777" opacity="0.75"/><rect x="607.9" y="283.0" width="1.3" height="1.4" fill="#777" opacity="0.75"/><rect x="610.3" y="283.0" width="3.7" height="1.4" fill="#777" opacity="0.75"/><rect x="615.1" y="283.0" width="4.2" height="1.4" fill="#777" opacity="0.75"/><rect x="620.2" y="283.0" width="4.9" height="1.4" fill="#777" opacity="0.75"/><rect x="626.3" y="283.0" width="1.4" height="1.4" fill="#777" opacity="0.75"/><rect x="628.6" y="283.0" width="3.3" height="1.4" fill="#777" opacity="0.75"/><rect x="633.0" y="283.0" width="2.4" height="1.4" fill="#777" opacity="0.75"/><rect x="579" y="280" width="5" height="1.3" fill="#f0a347"/><rect x="586" y="283" width="12" height="1.3" fill="#f0a347"/></svg><!-- /thumbs -->
<!-- annotation -->
<div class="a" style="left:663px;top:76px;width:127px;height:51px;border:5px solid #e8412b;border-radius:5.5px"></div>
<svg style="left:0;top:0" width="1041" height="716" viewBox="0 0 1041 716"><path d="M862.8 440.3L778.3 161" stroke="#e8412b" stroke-width="4.9" stroke-linecap="round" fill="none"/><path d="M773.9 145.8L789.6 162.6L781.2 160.5L776 161.9L769.7 167.8Z" fill="#e8412b" stroke="#e8412b" stroke-width="0.6" stroke-linejoin="round"/></svg>

</body></html>
